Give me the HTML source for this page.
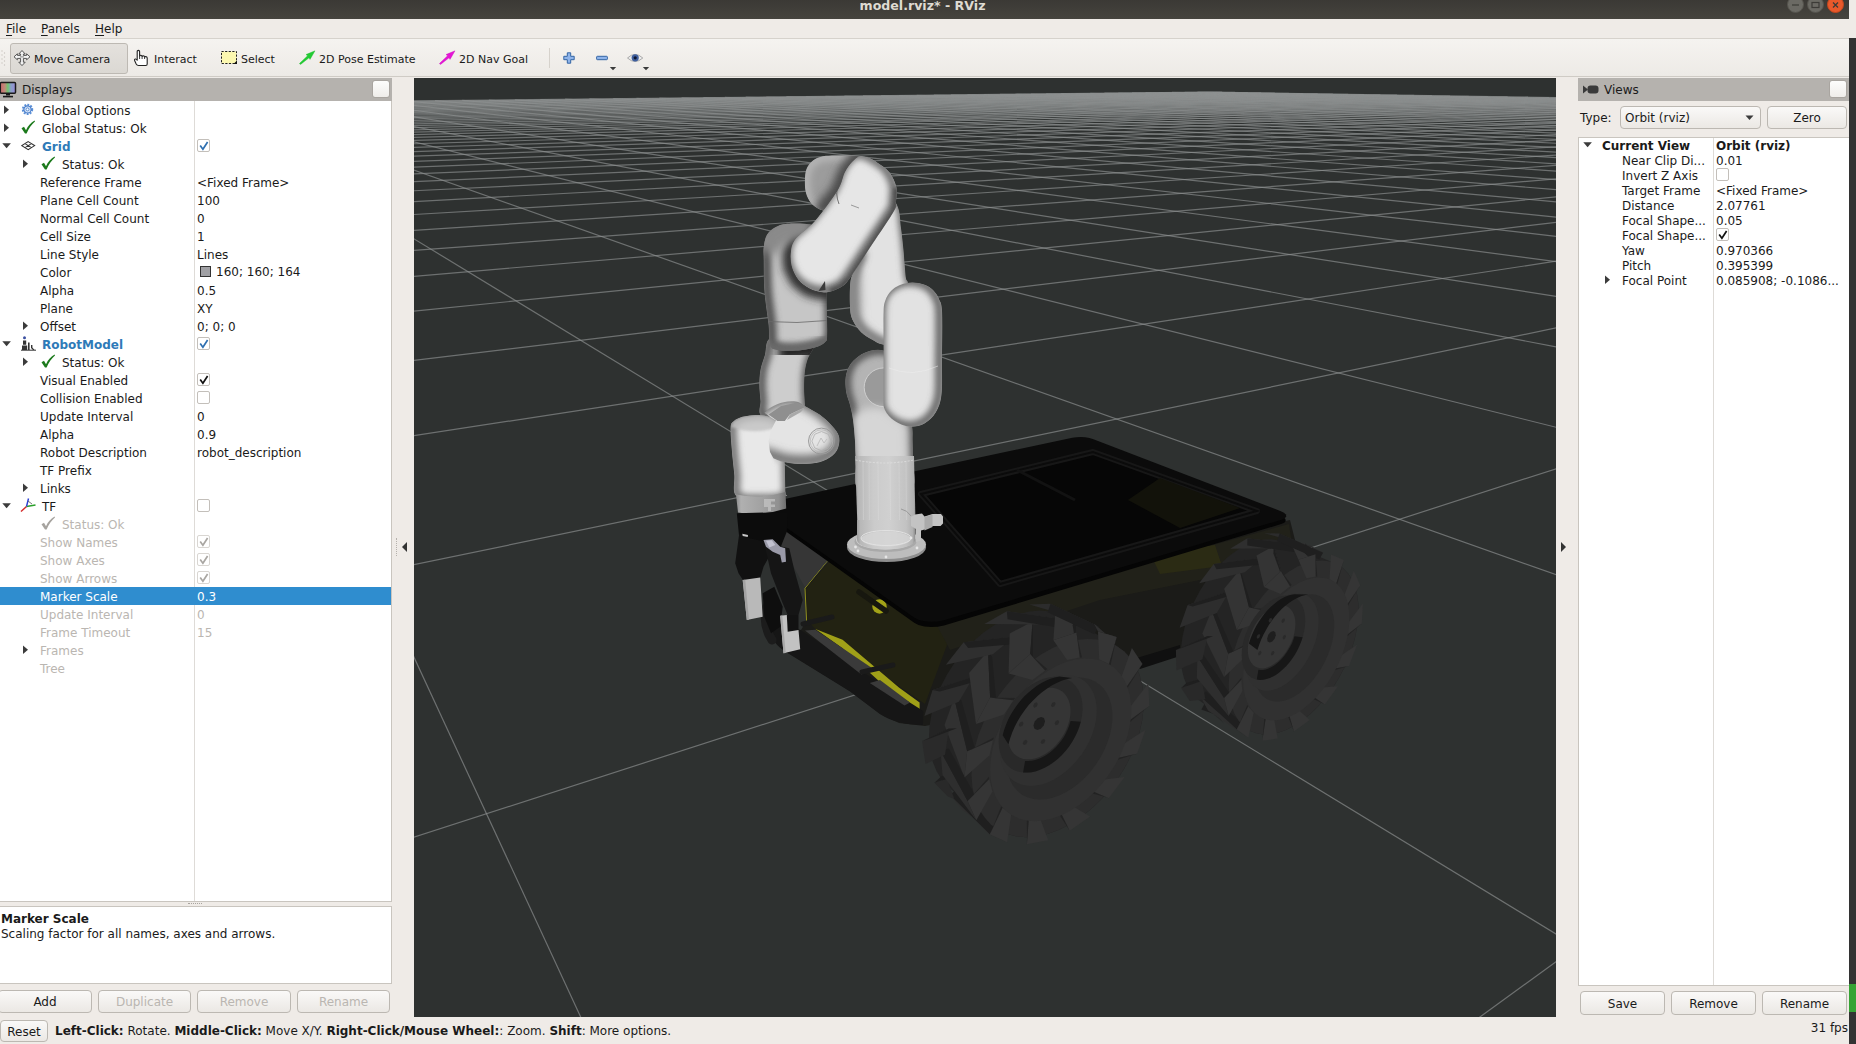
<!DOCTYPE html>
<html lang="en"><head><meta charset="utf-8"><title>model.rviz* - RViz</title>
<style>
*{box-sizing:border-box;margin:0;padding:0}
html,body{width:1856px;height:1044px;overflow:hidden;background:#efebe7}
body{font-family:"DejaVu Sans","Liberation Sans",sans-serif;font-size:12px;color:#1a1a1a;position:relative;line-height:18px}
.abs{position:absolute}
.t{position:absolute;white-space:nowrap;height:18px;line-height:18px}
.dis{color:#bab6b1}
.btn{position:absolute;border:1px solid #bcb8b2;border-radius:4px;background:linear-gradient(#faf9f8,#ebe8e4);text-align:center;font-size:12px;line-height:21px}
.cb{position:absolute;width:13px;height:13px;border:1px solid #c3bfba;border-radius:2px;background:#fff}
.b{font-weight:bold}
.blue{color:#2e7ab8;font-weight:bold}
u{text-decoration:underline;text-underline-offset:2px}
</style></head>
<body>
<div class="abs" style="left:0;top:0;width:1849px;height:19px;background:linear-gradient(#3b3935,#46443e)"></div>
<div class="t b" style="left:0;width:1849px;top:-3px;text-align:center;color:#dfdbd2;font-size:12.6px;padding-right:4px">model.rviz* - RViz</div>
<svg class="abs" style="left:1780px;top:0" width="70" height="19" viewBox="0 0 70 19"><circle cx="15.5" cy="4.5" r="8" fill="#6b6a64" stroke="#55534d"/><path d="M12 5h7" stroke="#3c3b37" stroke-width="1.2"/><circle cx="35.5" cy="4.5" r="8" fill="#6b6a64" stroke="#55534d"/><rect x="32" y="2.5" width="7" height="5" fill="none" stroke="#3c3b37" stroke-width="1.2"/><circle cx="55.5" cy="4.5" r="8" fill="#e9592b" stroke="#c4461d"/><path d="M53 2.5l5 5m0-5l-5 5" stroke="#3c3b37" stroke-width="1.3"/></svg>
<div class="abs" style="left:1849px;top:38px;width:7px;height:1006px;background:#333333"></div>
<div class="abs" style="left:1849px;top:984px;width:7px;height:28px;background:#35a334"></div>
<div class="abs" style="left:0;top:19px;width:1849px;height:20px;background:#efebe7;border-bottom:1px solid #d6d2cc"></div>
<div class="t" style="left:6px;top:20px"><u>F</u>ile</div>
<div class="t" style="left:41px;top:20px"><u>P</u>anels</div>
<div class="t" style="left:95px;top:20px"><u>H</u>elp</div>
<div class="abs" style="left:0;top:39px;width:1849px;height:38px;background:linear-gradient(#f5f3f0,#edeae6);border-bottom:1px solid #cfcbc5"></div>
<div class="abs" style="left:10px;top:43px;width:118px;height:31px;border:1px solid #bdb9b3;border-radius:3px;background:linear-gradient(#e4e1dd,#dbd8d3)"></div>
<div class="t" style="left:34px;top:51px;font-size:11px">Move Camera</div>
<div class="t" style="left:154px;top:51px;font-size:11px">Interact</div>
<div class="t" style="left:241px;top:51px;font-size:11px">Select</div>
<div class="t" style="left:319px;top:51px;font-size:11px">2D Pose Estimate</div>
<div class="t" style="left:459px;top:51px;font-size:11px">2D Nav Goal</div>
<div class="abs" style="left:549px;top:48px;width:1px;height:20px;background:#d6d2cc"></div>
<div class="abs" style="left:0;top:78px;width:392px;height:23px;background:#b5b2ae"></div>
<div class="t" style="left:22px;top:81px">Displays</div>
<div class="abs" style="left:372px;top:80px;width:18px;height:18px;border:1px solid #a9a5a0;border-radius:3px;background:linear-gradient(#fdfdfc,#efedea)"></div>
<div class="abs" style="left:0;top:101px;width:392px;height:801px;background:#fff;border-right:1px solid #c9c5bf;border-bottom:1px solid #c9c5bf"></div>
<div class="abs" style="left:194px;top:101px;width:1px;height:800px;background:#dedbd7"></div>
<svg class="abs" style="left:4px;top:105px" width="8" height="10" viewBox="0 0 8 10"><path d="M0 0.5 L5 4.7 L0 9Z" fill="#3b3b3b"/></svg>
<svg class="abs" style="left:21px;top:103px" width="14" height="14" viewBox="0.5 0.6 14 14"><circle cx="7" cy="7" r="4.6" fill="none" stroke="#5b8fd6" stroke-width="2.2" stroke-dasharray="1.8 1.2"/><circle cx="7" cy="7" r="3.6" fill="#dbe7f8" stroke="#4a7fcb" stroke-width="1.2"/><circle cx="7" cy="7" r="1.5" fill="#fff" stroke="#4a7fcb" stroke-width="0.9"/></svg>
<div class="t " style="left:42px;top:102px;">Global Options</div>
<svg class="abs" style="left:4px;top:123px" width="8" height="10" viewBox="0 0 8 10"><path d="M0 0.5 L5 4.7 L0 9Z" fill="#3b3b3b"/></svg>
<svg class="abs" style="left:20px;top:120px" width="16" height="14" viewBox="0 0 16 14"><path d="M1.5 8.2 L4 6.8 L6 10.2 C8 6 11 2.6 14.6 0.6 L15 1.4 C11.5 4.4 8.6 8.6 6.6 13.4 L5 13.4 Z" fill="#1c7a1c"/></svg>
<div class="t " style="left:42px;top:120px;">Global Status: Ok</div>
<svg class="abs" style="left:2px;top:143px" width="11" height="7" viewBox="0 0 11 7"><path d="M0.3 0.3 L8.9 0.3 L4.6 5.2Z" fill="#3b3b3b"/></svg>
<svg class="abs" style="left:21px;top:141px" width="15" height="11" viewBox="0 0 15 11"><path d="M7.2 0.6 L13.6 4.6 L7.2 8.6 L0.8 4.6Z M4 2.6 L10.4 6.6 M10.4 2.6 L4 6.6" fill="none" stroke="#333" stroke-width="1.1"/></svg>
<div class="t blue" style="left:42px;top:138px;">Grid</div>
<div class="cb" style="left:197px;top:139px;"></div><svg class="abs" style="left:199px;top:141px" width="10" height="10" viewBox="0 0 10 10"><path d="M1.2 4.6 L3.9 8.2 L8.6 1" fill="none" stroke="#2e6fb0" stroke-width="1.7"/></svg>
<svg class="abs" style="left:23px;top:159px" width="8" height="10" viewBox="0 0 8 10"><path d="M0 0.5 L5 4.7 L0 9Z" fill="#3b3b3b"/></svg>
<svg class="abs" style="left:40px;top:156px" width="16" height="14" viewBox="0 0 16 14"><path d="M1.5 8.2 L4 6.8 L6 10.2 C8 6 11 2.6 14.6 0.6 L15 1.4 C11.5 4.4 8.6 8.6 6.6 13.4 L5 13.4 Z" fill="#1c7a1c"/></svg>
<div class="t " style="left:62px;top:156px;">Status: Ok</div>
<div class="t " style="left:40px;top:174px;">Reference Frame</div>
<div class="t " style="left:197px;top:174px;">&lt;Fixed Frame&gt;</div>
<div class="t " style="left:40px;top:192px;">Plane Cell Count</div>
<div class="t " style="left:197px;top:192px;">100</div>
<div class="t " style="left:40px;top:210px;">Normal Cell Count</div>
<div class="t " style="left:197px;top:210px;">0</div>
<div class="t " style="left:40px;top:228px;">Cell Size</div>
<div class="t " style="left:197px;top:228px;">1</div>
<div class="t " style="left:40px;top:246px;">Line Style</div>
<div class="t " style="left:197px;top:246px;">Lines</div>
<div class="t " style="left:40px;top:264px;">Color</div>
<div class="abs" style="left:200px;top:266px;width:11px;height:11px;background:#a0a0a4;border:1px solid #333"></div>
<div class="t" style="left:216px;top:263px">160; 160; 164</div>
<div class="t " style="left:40px;top:282px;">Alpha</div>
<div class="t " style="left:197px;top:282px;">0.5</div>
<div class="t " style="left:40px;top:300px;">Plane</div>
<div class="t " style="left:197px;top:300px;">XY</div>
<svg class="abs" style="left:23px;top:321px" width="8" height="10" viewBox="0 0 8 10"><path d="M0 0.5 L5 4.7 L0 9Z" fill="#3b3b3b"/></svg>
<div class="t " style="left:40px;top:318px;">Offset</div>
<div class="t " style="left:197px;top:318px;">0; 0; 0</div>
<svg class="abs" style="left:2px;top:341px" width="11" height="7" viewBox="0 0 11 7"><path d="M0.3 0.3 L8.9 0.3 L4.6 5.2Z" fill="#3b3b3b"/></svg>
<svg class="abs" style="left:20px;top:336px" width="17" height="15" viewBox="0 0 17 15"><circle cx="4.5" cy="1.8" r="1.5" fill="#3a4fa0"/><path d="M3 4.5h3.2v4.2H3z M2 9.5h5.2v4.5H2z M8 6.5 h1.6 v7.5 H8z M11 9 h1.4 v2.6 l2.2 2.4 h-1.6 l-2 -2z" fill="#333"/><path d="M1 14.2h15" stroke="#333" stroke-width="1"/></svg>
<div class="t blue" style="left:42px;top:336px;">RobotModel</div>
<div class="cb" style="left:197px;top:337px;"></div><svg class="abs" style="left:199px;top:339px" width="10" height="10" viewBox="0 0 10 10"><path d="M1.2 4.6 L3.9 8.2 L8.6 1" fill="none" stroke="#2e6fb0" stroke-width="1.7"/></svg>
<svg class="abs" style="left:23px;top:357px" width="8" height="10" viewBox="0 0 8 10"><path d="M0 0.5 L5 4.7 L0 9Z" fill="#3b3b3b"/></svg>
<svg class="abs" style="left:40px;top:354px" width="16" height="14" viewBox="0 0 16 14"><path d="M1.5 8.2 L4 6.8 L6 10.2 C8 6 11 2.6 14.6 0.6 L15 1.4 C11.5 4.4 8.6 8.6 6.6 13.4 L5 13.4 Z" fill="#1c7a1c"/></svg>
<div class="t " style="left:62px;top:354px;">Status: Ok</div>
<div class="t " style="left:40px;top:372px;">Visual Enabled</div>
<div class="cb" style="left:197px;top:373px;"></div><svg class="abs" style="left:199px;top:375px" width="10" height="10" viewBox="0 0 10 10"><path d="M1.2 4.6 L3.9 8.2 L8.6 1" fill="none" stroke="#111" stroke-width="1.7"/></svg>
<div class="t " style="left:40px;top:390px;">Collision Enabled</div>
<div class="cb" style="left:197px;top:391px;"></div>
<div class="t " style="left:40px;top:408px;">Update Interval</div>
<div class="t " style="left:197px;top:408px;">0</div>
<div class="t " style="left:40px;top:426px;">Alpha</div>
<div class="t " style="left:197px;top:426px;">0.9</div>
<div class="t " style="left:40px;top:444px;">Robot Description</div>
<div class="t " style="left:197px;top:444px;">robot_description</div>
<div class="t " style="left:40px;top:462px;">TF Prefix</div>
<svg class="abs" style="left:23px;top:483px" width="8" height="10" viewBox="0 0 8 10"><path d="M0 0.5 L5 4.7 L0 9Z" fill="#3b3b3b"/></svg>
<div class="t " style="left:40px;top:480px;">Links</div>
<svg class="abs" style="left:2px;top:503px" width="11" height="7" viewBox="0 0 11 7"><path d="M0.3 0.3 L8.9 0.3 L4.6 5.2Z" fill="#3b3b3b"/></svg>
<svg class="abs" style="left:20px;top:498px" width="17" height="15" viewBox="0 0 17 15"><path d="M6.5 8.5 L1 13.5" stroke="#d42a2a" stroke-width="1.4"/><path d="M6.5 8.5 L15.5 7" stroke="#2aa02a" stroke-width="1.4"/><path d="M6.5 8.5 L8.5 0.5" stroke="#2a3fd4" stroke-width="1.4"/><path d="M8 3 L12 6" stroke="#555" stroke-width="0.8"/></svg>
<div class="t " style="left:42px;top:498px;">TF</div>
<div class="cb" style="left:197px;top:499px;"></div>
<svg class="abs" style="left:40px;top:516px" width="16" height="14" viewBox="0 0 16 14"><path d="M1.5 8.2 L4 6.8 L6 10.2 C8 6 11 2.6 14.6 0.6 L15 1.4 C11.5 4.4 8.6 8.6 6.6 13.4 L5 13.4 Z" fill="#a6a39f"/></svg>
<div class="t dis" style="left:62px;top:516px;">Status: Ok</div>
<div class="t dis" style="left:40px;top:534px;">Show Names</div>
<div class="cb" style="left:197px;top:535px;border-color:#d9d6d2;"></div><svg class="abs" style="left:199px;top:537px" width="10" height="10" viewBox="0 0 10 10"><path d="M1.2 4.6 L3.9 8.2 L8.6 1" fill="none" stroke="#a9a6a2" stroke-width="1.7"/></svg>
<div class="t dis" style="left:40px;top:552px;">Show Axes</div>
<div class="cb" style="left:197px;top:553px;border-color:#d9d6d2;"></div><svg class="abs" style="left:199px;top:555px" width="10" height="10" viewBox="0 0 10 10"><path d="M1.2 4.6 L3.9 8.2 L8.6 1" fill="none" stroke="#a9a6a2" stroke-width="1.7"/></svg>
<div class="t dis" style="left:40px;top:570px;">Show Arrows</div>
<div class="cb" style="left:197px;top:571px;border-color:#d9d6d2;"></div><svg class="abs" style="left:199px;top:573px" width="10" height="10" viewBox="0 0 10 10"><path d="M1.2 4.6 L3.9 8.2 L8.6 1" fill="none" stroke="#a9a6a2" stroke-width="1.7"/></svg>
<div class="abs" style="left:0;top:587px;width:391px;height:18px;background:#2f8dcf"></div>
<div class="t " style="left:40px;top:588px;color:#fff;">Marker Scale</div>
<div class="t " style="left:197px;top:588px;color:#fff;">0.3</div>
<div class="t dis" style="left:40px;top:606px;">Update Interval</div>
<div class="t dis" style="left:197px;top:606px;">0</div>
<div class="t dis" style="left:40px;top:624px;">Frame Timeout</div>
<div class="t dis" style="left:197px;top:624px;">15</div>
<svg class="abs" style="left:23px;top:645px" width="8" height="10" viewBox="0 0 8 10"><path d="M0 0.5 L5 4.7 L0 9Z" fill="#3b3b3b"/></svg>
<div class="t dis" style="left:40px;top:642px;">Frames</div>
<div class="t dis" style="left:40px;top:660px;">Tree</div>
<div class="abs" style="left:188px;top:903px;width:14px;height:1px;border-top:1px dotted #a8a49f"></div>
<div class="abs" style="left:0;top:906px;width:392px;height:78px;background:#fff;border:1px solid #c9c5bf;border-left:none"></div>
<div class="t b" style="left:1px;top:910px">Marker Scale</div>
<div class="t" style="left:1px;top:925px">Scaling factor for all names, axes and arrows.</div>
<div class="btn" style="left:-2px;top:990px;width:94px;height:23px;line-height:23px">Add</div>
<div class="btn dis" style="left:98px;top:990px;width:93px;height:23px;line-height:23px">Duplicate</div>
<div class="btn dis" style="left:197px;top:990px;width:94px;height:23px;line-height:23px">Remove</div>
<div class="btn dis" style="left:297px;top:990px;width:93px;height:23px;line-height:23px">Rename</div>
<svg class="abs" style="left:401px;top:541px" width="7" height="12" viewBox="0 0 7 12"><path d="M6 1 L1 6 L6 11Z" fill="#333"/></svg>
<div class="abs" style="left:396px;top:538px;width:1px;height:18px;border-left:1px dotted #b5b1ac"></div>
<svg class="abs" style="left:1560px;top:541px" width="7" height="12" viewBox="0 0 7 12"><path d="M1 1 L6 6 L1 11Z" fill="#333"/></svg>
<div class="btn" style="left:0px;top:1020px;width:48px;height:22px;line-height:22px">Reset</div>
<div class="t" style="left:55px;top:1022px"><b>Left-Click:</b> Rotate. <b>Middle-Click:</b> Move X/Y. <b>Right-Click/Mouse Wheel:</b>: Zoom. <b>Shift</b>: More options.</div>
<div class="t" style="left:1780px;width:68px;text-align:right;top:1019px">31 fps</div>
<div class="abs" style="left:1578px;top:78px;width:271px;height:23px;background:#b5b2ae"></div>
<svg class="abs" style="left:1582px;top:84px" width="17" height="11" viewBox="0 0 17 11"><path d="M1 1.5 L6 5.5 L1 9.5Z" fill="#3a3a3a"/><rect x="5.5" y="1.5" width="11" height="8" rx="3" fill="#3a3a3a"/></svg>
<div class="t" style="left:1604px;top:81px">Views</div>
<div class="abs" style="left:1829px;top:80px;width:18px;height:18px;border:1px solid #a9a5a0;border-radius:3px;background:linear-gradient(#fdfdfc,#efedea)"></div>
<div class="t" style="left:1580px;top:109px">Type:</div>
<div class="btn" style="left:1620px;top:106px;width:141px;height:23px;text-align:left;padding-left:4px;line-height:23px">Orbit (rviz)</div>
<svg class="abs" style="left:1745px;top:115px" width="9" height="6" viewBox="0 0 9 6"><path d="M0.5 0.5 L8.5 0.5 L4.5 5Z" fill="#3b3b3b"/></svg>
<div class="btn" style="left:1767px;top:106px;width:80px;height:23px;line-height:23px">Zero</div>
<div class="abs" style="left:1578px;top:137px;width:271px;height:849px;background:#fff;border:1px solid #c9c5bf;border-right:none"></div>
<div class="abs" style="left:1713px;top:138px;width:1px;height:847px;background:#dedbd7"></div>
<svg class="abs" style="left:1583px;top:142px" width="11" height="7" viewBox="0 0 11 7"><path d="M0.3 0.3 L8.9 0.3 L4.6 5.2Z" fill="#3b3b3b"/></svg>
<div class="t b" style="left:1602px;top:137px">Current View</div><div class="t b" style="left:1716px;top:137px">Orbit (rviz)</div>
<div class="t" style="left:1622px;top:152px">Near Clip Di...</div>
<div class="t" style="left:1716px;top:152px">0.01</div>
<div class="t" style="left:1622px;top:167px">Invert Z Axis</div>
<div class="cb" style="left:1716px;top:168px;"></div>
<div class="t" style="left:1622px;top:182px">Target Frame</div>
<div class="t" style="left:1716px;top:182px">&lt;Fixed Frame&gt;</div>
<div class="t" style="left:1622px;top:197px">Distance</div>
<div class="t" style="left:1716px;top:197px">2.07761</div>
<div class="t" style="left:1622px;top:212px">Focal Shape...</div>
<div class="t" style="left:1716px;top:212px">0.05</div>
<div class="t" style="left:1622px;top:227px">Focal Shape...</div>
<div class="cb" style="left:1716px;top:228px;"></div><svg class="abs" style="left:1718px;top:230px" width="10" height="10" viewBox="0 0 10 10"><path d="M1.2 4.6 L3.9 8.2 L8.6 1" fill="none" stroke="#111" stroke-width="1.7"/></svg>
<div class="t" style="left:1622px;top:242px">Yaw</div>
<div class="t" style="left:1716px;top:242px">0.970366</div>
<div class="t" style="left:1622px;top:257px">Pitch</div>
<div class="t" style="left:1716px;top:257px">0.395399</div>
<div class="t" style="left:1622px;top:272px">Focal Point</div>
<div class="t" style="left:1716px;top:272px">0.085908; -0.1086...</div>
<svg class="abs" style="left:1605px;top:275px" width="8" height="10" viewBox="0 0 8 10"><path d="M0 0.5 L5 4.7 L0 9Z" fill="#3b3b3b"/></svg>
<div class="btn" style="left:1580px;top:991px;width:85px;height:24px;line-height:24px">Save</div>
<div class="btn" style="left:1671px;top:991px;width:85px;height:24px;line-height:24px">Remove</div>
<div class="btn" style="left:1762px;top:991px;width:85px;height:24px;line-height:24px">Rename</div>
<svg class="abs" style="left:0;top:39px" width="700" height="38" viewBox="0 39 700 38">
<!-- grip -->
<g fill="#c9c5bf"><circle cx="2" cy="51" r="0.7"/><circle cx="4.5" cy="53" r="0.7"/><circle cx="2" cy="55" r="0.7"/><circle cx="4.5" cy="57" r="0.7"/><circle cx="2" cy="59" r="0.7"/><circle cx="4.5" cy="61" r="0.7"/><circle cx="2" cy="63" r="0.7"/><circle cx="4.5" cy="65" r="0.7"/></g>
<!-- move camera icon -->
<g transform="translate(22,58)" fill="#f4f4f4" stroke="#555" stroke-width="1" stroke-linejoin="round">
<path d="M0 -7.5 L3.2 -4 L1.4 -4 L1.4 -2.6 L4.6 -2.6 L4.6 -4.2 L8 -1.2 L4.6 1.8 L4.6 0.4 L1.4 0.4 L1.4 4.2 L3.2 4.2 L0 7.6 L-3.2 4.2 L-1.4 4.2 L-1.4 0.4 L-4.6 0.4 L-4.6 1.8 L-8 -1.2 L-4.6 -4.2 L-4.6 -2.6 L-1.4 -2.6 L-1.4 -4 L-3.2 -4Z"/>
<path d="M-2 -1.1 h4" stroke-width="0.7"/>
</g>
<!-- hand icon -->
<g transform="translate(134,50)" fill="#fff" stroke="#222" stroke-width="1.1" stroke-linejoin="round">
<path d="M3.2 9.5 L3.2 1.6 Q3.2 0.4 4.4 0.4 Q5.6 0.4 5.6 1.6 L5.6 6 Q5.8 5.2 6.9 5.2 Q8 5.2 8.1 6.4 Q8.4 5.8 9.4 5.8 Q10.5 5.9 10.6 7 Q11 6.5 12 6.6 Q13.2 6.8 13.2 8 L13.2 14 Q13.2 15.5 11.8 15.5 L4.6 15.5 Q3 15.5 2.2 14 L0.6 10.6 Q0.2 9.4 1.2 9 Q2.3 8.7 3.2 10.2Z"/>
<path d="M5.6 6 v3 M8.1 6.4 v2.6 M10.6 7 v2" fill="none" stroke-width="0.9"/>
</g>
<!-- select icon -->
<rect x="221.5" y="51.5" width="15" height="12" fill="#fcf8b0" stroke="#222" stroke-width="1" stroke-dasharray="2.2 1.4"/>
<path d="M237 60.5 L237 64 L233.5 64Z" fill="#111"/>
<!-- green arrow -->
<path d="M299.4 63.6 L300.6 64.4 L309 57.8 L310 59.4 L315 50.8 L306 54.6 L307.6 55.8 Z" fill="#22cc33" stroke="#1fb82e" stroke-width="0.4"/>
<!-- magenta arrow -->
<path d="M439.4 63.6 L440.6 64.4 L449 57.8 L450 59.4 L455 50.8 L446 54.6 L447.6 55.8 Z" fill="#e614d6" stroke="#c810ba" stroke-width="0.4"/>
<!-- plus -->
<path d="M567.3 52.8 h3.4 v3.5 h3.5 v3.4 h-3.5 v3.5 h-3.4 v-3.5 h-3.5 v-3.4 h3.5z" fill="#8fb4ea" stroke="#3465a4" stroke-width="1" stroke-linejoin="round"/>
<!-- minus -->
<rect x="596.6" y="56.3" width="10.8" height="3.4" rx="0.8" fill="#8fb4ea" stroke="#3465a4" stroke-width="1"/>
<path d="M609.8 67 h6.4 l-3.2 3.2z" fill="#3a3a3a"/>
<!-- eye -->
<path d="M627.5 58 Q635 50.8 642.8 58 Q635 65 627.5 58Z" fill="#ececec" stroke="#aaaaaa" stroke-width="1"/>
<circle cx="635.2" cy="57.8" r="3.6" fill="#3f5f9e"/><circle cx="635.2" cy="57.8" r="1.6" fill="#0c1530"/>
<path d="M642.8 67 h6.4 l-3.2 3.2z" fill="#3a3a3a"/>
</svg>
<!-- displays icon -->
<svg class="abs" style="left:0;top:81px" width="17" height="18" viewBox="0 0 17 18">
<defs><linearGradient id="dsp" x1="0" x2="1" y1="0" y2="0"><stop offset="0" stop-color="#c76a6a"/><stop offset="0.3" stop-color="#c08a7a"/><stop offset="0.5" stop-color="#6fc46f"/><stop offset="0.7" stop-color="#8aa0c8"/><stop offset="1" stop-color="#9a8ad8"/></linearGradient></defs>
<rect x="0.3" y="1.6" width="15.2" height="10.6" rx="1" fill="url(#dsp)" stroke="#1a1a1a" stroke-width="1.5"/>
<path d="M6 12.5 h4 v2 h-4z" fill="#1a1a1a"/><path d="M3 15.6 h10" stroke="#1a1a1a" stroke-width="1.6"/>
</svg>

<div class="abs" style="left:414px;top:78px;width:1142px;height:939px;background:#2e3130;overflow:hidden"><svg class="abs" style="left:0;top:0" width="1142" height="939" viewBox="0 0 1142 939"><g fill="none" stroke="#8f9191" stroke-opacity="0.66" stroke-width="1.2"><path d="M795.8 14.0L1147.0 19.8"/><path d="M795.8 14.0L-5.0 23.0"/><path d="M783.4 14.1L1147.0 20.3"/><path d="M808.2 14.2L-5.0 23.5"/><path d="M770.7 14.3L1147.0 20.7"/><path d="M820.9 14.4L-5.0 24.0"/><path d="M757.9 14.4L1147.0 21.2"/><path d="M833.9 14.6L-5.0 24.6"/><path d="M744.8 14.6L1147.0 21.8"/><path d="M847.2 14.8L-5.0 25.2"/><path d="M731.5 14.7L1147.0 22.3"/><path d="M860.8 15.1L-5.0 25.8"/><path d="M718.0 14.9L1147.0 22.9"/><path d="M874.8 15.3L-5.0 26.4"/><path d="M704.3 15.0L1147.0 23.5"/><path d="M889.1 15.5L-5.0 27.1"/><path d="M690.4 15.2L1147.0 24.1"/><path d="M903.7 15.8L-5.0 27.8"/><path d="M676.2 15.3L1147.0 24.8"/><path d="M918.8 16.0L-5.0 28.6"/><path d="M661.8 15.5L1147.0 25.4"/><path d="M934.2 16.3L-5.0 29.3"/><path d="M647.1 15.7L1147.0 26.2"/><path d="M950.1 16.5L-5.0 30.1"/><path d="M632.1 15.8L1147.0 26.9"/><path d="M966.4 16.8L-5.0 31.0"/><path d="M617.0 16.0L1147.0 27.7"/><path d="M983.1 17.1L-5.0 31.9"/><path d="M601.5 16.2L1147.0 28.5"/><path d="M1000.2 17.4L-5.0 32.8"/><path d="M585.8 16.3L1147.0 29.4"/><path d="M1017.9 17.7L-5.0 33.8"/><path d="M569.7 16.5L1147.0 30.4"/><path d="M1036.0 18.0L-5.0 34.8"/><path d="M553.4 16.7L1147.0 31.3"/><path d="M1054.7 18.3L-5.0 35.9"/><path d="M536.8 16.9L1147.0 32.4"/><path d="M1073.9 18.6L-5.0 37.1"/><path d="M519.9 17.1L1147.0 33.5"/><path d="M1093.6 18.9L-5.0 38.4"/><path d="M502.7 17.3L1147.0 34.7"/><path d="M1114.0 19.2L-5.0 39.7"/><path d="M485.1 17.5L1147.0 35.9"/><path d="M1135.0 19.6L-5.0 41.1"/><path d="M467.2 17.7L1147.0 37.3"/><path d="M1147.0 20.1L-5.0 42.6"/><path d="M449.0 17.9L1147.0 38.7"/><path d="M1147.0 21.0L-5.0 44.2"/><path d="M430.4 18.1L1147.0 40.3"/><path d="M1147.0 21.8L-5.0 45.9"/><path d="M411.4 18.3L1147.0 41.9"/><path d="M1147.0 22.8L-5.0 47.7"/><path d="M392.1 18.5L1147.0 43.7"/><path d="M1147.0 23.8L-5.0 49.7"/><path d="M372.4 18.7L1147.0 45.7"/><path d="M1147.0 24.9L-5.0 51.9"/><path d="M352.3 19.0L1147.0 47.8"/><path d="M1147.0 26.1L-5.0 54.2"/><path d="M331.7 19.2L1147.0 50.1"/><path d="M1147.0 27.4L-5.0 56.7"/><path d="M310.8 19.4L1147.0 52.6"/><path d="M1147.0 28.8L-5.0 59.5"/><path d="M289.4 19.7L1147.0 55.3"/><path d="M1147.0 30.4L-5.0 62.6"/><path d="M267.6 19.9L1147.0 58.4"/><path d="M1147.0 32.1L-5.0 65.9"/><path d="M245.3 20.2L1147.0 61.7"/><path d="M1147.0 34.0L-5.0 69.6"/><path d="M222.5 20.4L1147.0 65.5"/><path d="M1147.0 36.1L-5.0 73.7"/><path d="M199.2 20.7L1147.0 69.7"/><path d="M1147.0 38.5L-5.0 78.3"/><path d="M175.4 20.9L1147.0 74.5"/><path d="M1147.0 41.2L-5.0 83.5"/><path d="M151.1 21.2L1147.0 79.9"/><path d="M1147.0 44.2L-5.0 89.4"/><path d="M126.2 21.5L1147.0 86.1"/><path d="M1147.0 47.6L-5.0 96.1"/><path d="M100.8 21.8L1147.0 93.4"/><path d="M1147.0 51.6L-5.0 103.9"/><path d="M74.8 22.1L1147.0 101.9"/><path d="M1147.0 56.3L-5.0 113.0"/><path d="M48.2 22.4L1147.0 112.0"/><path d="M1147.0 61.9L-5.0 123.8"/><path d="M21.0 22.7L1147.0 124.3"/><path d="M1147.0 68.5L-5.0 136.8"/><path d="M-5.0 23.2L1147.0 139.6"/><path d="M1147.0 76.7L-5.0 152.7"/><path d="M-5.0 26.8L1147.0 158.9"/><path d="M1147.0 87.0L-5.0 172.8"/><path d="M-5.0 31.6L1147.0 184.3"/><path d="M1147.0 100.4L-5.0 198.7"/><path d="M-5.0 38.1L1147.0 219.2"/><path d="M1147.0 118.3L-5.0 233.6"/><path d="M-5.0 47.6L1147.0 269.9"/><path d="M1147.0 143.7L-5.0 283.0"/><path d="M-5.0 62.6L1147.0 350.5"/><path d="M1147.0 182.4L-5.0 358.4"/><path d="M-5.0 90.3L1147.0 498.5"/><path d="M1147.0 248.9L-5.0 487.7"/><path d="M-5.0 157.8L1147.0 859.0"/><path d="M1147.0 389.2L-5.0 760.7"/><path d="M-5.0 568.5L169.0 944.0"/><path d="M1147.0 880.1L1059.0 944.0"/></g><g transform="translate(-414,-78)"><path d="M805.0 588.0L845.0 543.0L930.0 600.0L1290.0 520.0L1300.0 560.0L1215.0 640.0L1178.0 655.0L1140.0 668.0L1060.0 700.0L925.0 726.0L899.0 723.0L880.0 714.0L850.0 691.0L786.0 652.0L772.0 639.0L770.0 622.0L801.0 630.0L807.0 620.0Z" fill="#1b1b18"/><path d="M806.0 588.5L845.0 543.0L960.0 610.0L925.0 704.0L815.0 629.0L807.5 620.0Z" fill="#222212"/><path d="M830 557.5L805 588.2L806.6 621" fill="none" stroke="#8f8f1a" stroke-width="1"/><path d="M935.0 622.0L1289.0 524.0L1292.0 545.0L1225.0 575.0L1100.0 600.0L950.0 650.0Z" fill="#212119"/><path d="M1150.0 553.0L1215.0 545.0L1222.0 566.0L1160.0 574.0Z" fill="#2b2b14"/><path d="M1130.0 660.0L1180.0 645.0L1180.0 656.0L1140.0 669.0Z" fill="#101010"/><path d="M776.0 520.0L830.0 557.5L805.0 587.5L779.0 540.0Z" fill="#363636"/><circle cx="879.5" cy="606.5" r="7.2" fill="#a3a318"/><path d="M859 592L886 611" fill="none" stroke="#17170f" stroke-width="5.5" stroke-linecap="round"/><path d="M815.4 629.0L842.6 639.8L898.9 687.6L919.6 702.6L919.6 709.2L898.9 698.9L842.6 648.2L820.0 632.3Z" fill="#a0a018"/><path d="M771 624C771 640 776 646 786.3 652L850 691.4L880 714C892 722 905 724.5 923 725L923.3 711L890 690L801.3 630.4" fill="#161616"/><path d="M805.0 630.4L815.4 629.8L874.5 669.8L861.4 674.5Z" fill="#3a3a3a"/><path d="M869.8 683.0L880.0 680.0L910.0 702.6L904.5 705.5Z" fill="#3a3a3a"/><path d="M803 624L832 617M862 672L893 665" fill="none" stroke="#1a1a1a" stroke-width="5" stroke-linecap="round"/><path d="M772 600C764 606 762 625 772 640" fill="none" stroke="#1c1c1c" stroke-width="9" stroke-linecap="round"/><path d="M914.2 622.8L918.5 625.0L924.3 626.5L931.0 627.1L937.8 626.7L944.0 625.4L1281.2 524.1L1284.3 522.7L1285.7 521.0L1285.4 519.0L1283.4 517.0L1279.9 515.3L1092.7 442.6L1089.3 441.6L1085.1 441.0L1080.6 440.7L1076.2 440.9L1072.2 441.5L771.1 506.3L766.6 507.6L763.2 509.2L761.2 511.1L760.9 513.0L762.4 514.7Z" fill="#050505"/><path d="M914.0 617.6L918.4 619.8L924.2 621.3L930.9 621.8L937.7 621.5L943.9 620.2L1281.6 519.7L1284.8 518.3L1286.2 516.6L1285.9 514.6L1283.9 512.7L1280.3 510.9L1092.8 438.9L1089.4 437.9L1085.2 437.3L1080.7 437.0L1076.3 437.2L1072.3 437.8L770.7 502.0L766.2 503.3L762.8 504.9L760.9 506.8L760.6 508.7L762.0 510.4Z" fill="#0b0b0b"/><path d="M921.0 494.0L1093.0 452.0L1257.0 511.0L1000.0 584.0Z" fill="#060606" stroke="#171717" stroke-width="6" stroke-linejoin="round"/><path d="M921.0 494.0L1093.0 452.0L1257.0 511.0L1000.0 584.0Z" fill="none" stroke="#0b0b0b" stroke-width="2"/><path d="M1128.0 500.0L1160.0 478.0L1240.0 508.0L1180.0 528.0Z" fill="#12120a"/><path d="M1017 470L1075 500" stroke="#121212" stroke-width="3"/><path d="M1180.8 658.9L1181.0 648.3L1182.4 637.2L1185.0 625.7L1188.7 614.2L1193.5 602.9L1199.2 591.9L1205.8 581.5L1213.1 571.9L1221.1 563.3L1229.4 555.8L1238.0 549.6L1246.7 544.8L1255.3 541.5L1263.6 539.6L1271.6 539.3L1279.0 540.4L1285.8 543.0L1336.9 563.9L1342.9 567.9L1347.9 573.2L1352.1 579.6L1355.2 587.2L1357.3 595.7L1358.4 605.0L1358.4 614.9L1357.4 625.3L1355.4 635.9L1352.5 646.8L1348.7 657.6L1344.0 668.2L1338.5 678.5L1332.4 688.4L1325.6 697.6L1318.4 706.0L1310.7 713.6L1302.8 720.2L1294.6 725.6L1286.5 729.8L1278.3 732.7L1270.4 734.3L1262.8 734.4L1255.7 733.1L1249.2 730.4L1202.1 702.4L1196.2 698.2L1191.1 692.6L1187.0 685.8L1183.8 677.8L1181.7 668.8Z" fill="#242424"/><path d="M1224.0 677.0L1228.3 653.7L1211.6 610.3L1202.4 633.4Z" fill="#313131"/><path d="M1228.3 653.7L1211.6 610.3L1216.4 612.4L1234.0 653.3Z" fill="#1f1f1f"/><path d="M1179.6 627.7L1187.6 604.9L1229.5 591.1L1216.8 612.9Z" fill="#2d2d2d"/><path d="M1187.6 604.9L1229.5 591.1L1233.2 595.1L1192.6 606.6Z" fill="#1f1f1f"/><path d="M1236.8 629.9L1249.0 607.2L1239.6 569.9L1224.2 588.7Z" fill="#343434"/><path d="M1249.0 607.2L1239.6 569.9L1242.0 575.5L1253.0 610.8Z" fill="#1f1f1f"/><path d="M1199.2 583.2L1213.7 564.1L1261.8 557.7L1244.8 572.3Z" fill="#2f2f2f"/><path d="M1213.7 564.1L1261.8 557.7L1262.8 564.4L1216.5 569.2Z" fill="#1f1f1f"/><path d="M1264.0 587.1L1280.9 571.0L1273.8 545.9L1256.5 555.4Z" fill="#343434"/><path d="M1280.9 571.0L1273.8 545.9L1273.4 553.4L1282.2 577.6Z" fill="#1f1f1f"/><path d="M1230.1 548.8L1247.4 538.3L1295.9 544.2L1279.2 548.2Z" fill="#2f2f2f"/><path d="M1247.4 538.3L1295.9 544.2L1294.0 551.9L1247.3 545.5Z" fill="#1f1f1f"/><path d="M1298.5 559.8L1315.5 554.2L1305.4 543.6L1290.5 542.0Z" fill="#333333"/><path d="M1315.5 554.2L1305.4 543.6L1302.4 551.1L1313.9 562.1Z" fill="#1f1f1f"/><path d="M1264.2 533.2L1279.6 533.6L1323.2 552.7L1310.8 545.8Z" fill="#2c2c2c"/><path d="M1279.6 533.6L1323.2 552.7L1319.2 559.5L1277.0 541.1Z" fill="#1f1f1f"/><path d="M1215.3 712.8L1201.4 709.5L1212.9 713.6L1223.8 723.2Z" fill="#282828"/><path d="M1201.4 709.5L1212.9 713.6L1217.9 707.4L1205.1 702.7Z" fill="#1f1f1f"/><path d="M1248.3 737.7L1236.8 729.3L1200.4 696.3L1208.0 710.6Z" fill="#2e2e2e"/><path d="M1236.8 729.3L1200.4 696.3L1206.0 691.2L1241.7 722.8Z" fill="#1f1f1f"/><path d="M1189.8 701.1L1181.2 687.9L1201.8 680.7L1205.4 699.2Z" fill="#292929"/><path d="M1181.2 687.9L1201.8 680.7L1207.8 677.2L1186.6 682.7Z" fill="#1f1f1f"/><path d="M1228.6 715.9L1224.1 698.1L1197.4 656.5L1196.8 677.9Z" fill="#2e2e2e"/><path d="M1224.1 698.1L1197.4 656.5L1203.4 654.7L1230.1 694.1Z" fill="#1f1f1f"/><path d="M1176.4 670.6L1175.9 650.1L1207.6 636.1L1202.5 659.3Z" fill="#2a2a2a"/><path d="M1175.9 650.1L1207.6 636.1L1213.1 636.3L1181.8 648.0Z" fill="#1f1f1f"/><path d="M1229.2 675.0L1230.8 663.4L1233.7 651.5L1237.7 639.6L1242.8 627.7L1248.8 616.2L1255.7 605.3L1263.3 595.2L1271.4 586.1L1280.0 578.3L1288.8 571.7L1297.6 566.6L1306.3 562.9L1314.7 560.9L1322.7 560.4L1330.2 561.4L1336.9 563.9L1342.9 567.9L1347.9 573.2L1352.1 579.6L1355.2 587.2L1357.3 595.7L1358.4 605.0L1358.4 614.9L1357.4 625.3L1355.4 635.9L1352.5 646.8L1348.7 657.6L1344.0 668.2L1338.5 678.5L1332.4 688.4L1325.6 697.6L1318.4 706.0L1310.7 713.6L1302.8 720.2L1294.6 725.6L1286.5 729.8L1278.3 732.7L1270.4 734.3L1262.8 734.4L1255.7 733.1L1249.2 730.4L1243.4 726.1L1238.4 720.5L1234.4 713.6L1231.4 705.4L1229.5 696.1L1228.7 685.9L1229.2 675.0Z" fill="#2d2d2d"/><path d="M1224.0 677.0L1228.3 653.7L1247.3 645.1L1243.5 658.6Z" fill="#353535"/><path d="M1228.3 653.7L1247.3 645.1L1248.1 642.9L1233.9 650.7Z" fill="#232323"/><path d="M1236.8 629.9L1249.0 607.2L1265.1 611.0L1257.3 623.2Z" fill="#353535"/><path d="M1249.0 607.2L1265.1 611.0L1266.5 609.1L1254.0 607.9Z" fill="#232323"/><path d="M1264.0 587.1L1280.9 571.0L1290.1 586.2L1280.3 593.9Z" fill="#353535"/><path d="M1280.9 571.0L1290.1 586.2L1291.7 585.1L1284.0 575.1Z" fill="#232323"/><path d="M1298.5 559.8L1315.5 554.2L1315.8 576.6L1306.5 578.2Z" fill="#353535"/><path d="M1315.5 554.2L1315.8 576.6L1317.3 576.6L1315.9 560.7Z" fill="#232323"/><path d="M1331.0 554.4L1344.0 560.0L1336.1 584.0L1329.5 579.3Z" fill="#353535"/><path d="M1344.0 560.0L1336.1 584.0L1337.1 585.0L1341.9 567.1Z" fill="#232323"/><path d="M1353.9 570.7L1360.3 585.4L1346.6 605.6L1344.0 596.1Z" fill="#353535"/><path d="M1360.3 585.4L1346.6 605.6L1346.9 607.3L1356.4 591.6Z" fill="#232323"/><path d="M1362.9 603.4L1361.8 623.6L1345.6 636.1L1347.3 624.0Z" fill="#353535"/><path d="M1361.8 623.6L1345.6 636.1L1345.1 638.2L1357.1 627.6Z" fill="#232323"/><path d="M1357.0 644.8L1349.0 666.1L1333.7 668.8L1339.3 656.7Z" fill="#353535"/><path d="M1349.0 666.1L1333.7 668.8L1332.7 670.8L1344.4 667.3Z" fill="#232323"/><path d="M1338.0 686.3L1324.8 704.6L1313.6 697.1L1321.9 687.4Z" fill="#353535"/><path d="M1324.8 704.6L1313.6 697.1L1312.2 698.6L1321.3 702.8Z" fill="#232323"/><path d="M1309.8 719.9L1293.9 731.4L1289.2 715.2L1298.6 709.9Z" fill="#353535"/><path d="M1293.9 731.4L1289.2 715.2L1287.7 715.8L1292.2 727.0Z" fill="#232323"/><path d="M1277.7 738.6L1262.3 740.8L1265.6 718.7L1274.1 719.3Z" fill="#353535"/><path d="M1262.3 740.8L1265.6 718.7L1264.3 718.4L1262.9 734.4Z" fill="#232323"/><path d="M1248.3 737.7L1236.8 729.3L1248.1 706.3L1253.7 712.8Z" fill="#353535"/><path d="M1236.8 729.3L1248.1 706.3L1247.3 705.0L1239.9 722.4Z" fill="#232323"/><path d="M1228.6 715.9L1224.1 698.1L1241.3 679.8L1242.4 691.1Z" fill="#353535"/><path d="M1224.1 698.1L1241.3 679.8L1241.3 677.8L1229.0 692.4Z" fill="#232323"/><path d="M1243.5 671.1L1244.9 661.7L1247.2 652.0L1250.5 642.3L1254.6 632.6L1259.5 623.3L1265.1 614.4L1271.3 606.2L1277.9 598.8L1284.9 592.4L1292.0 587.0L1299.2 582.7L1306.3 579.7L1313.2 577.9L1319.7 577.4L1325.8 578.2L1331.4 580.1L1336.3 583.3L1340.5 587.5L1343.9 592.8L1346.6 599.0L1348.3 605.9L1349.3 613.5L1349.3 621.7L1348.6 630.2L1346.9 639.1L1344.5 648.0L1341.4 657.0L1337.5 665.8L1333.0 674.3L1327.9 682.5L1322.3 690.1L1316.3 697.1L1309.9 703.3L1303.3 708.7L1296.6 713.2L1289.9 716.6L1283.2 719.0L1276.7 720.2L1270.5 720.2L1264.7 719.0L1259.4 716.7L1254.7 713.1L1250.7 708.5L1247.4 702.7L1245.0 696.0L1243.6 688.4L1243.0 680.0L1243.5 671.1Z" fill="#313131"/><path d="M1254.6 664.3L1255.7 657.3L1257.4 650.1L1259.9 642.8L1263.0 635.7L1266.6 628.8L1270.8 622.2L1275.3 616.1L1280.3 610.5L1285.4 605.7L1290.7 601.7L1296.1 598.4L1301.4 596.1L1306.6 594.7L1311.5 594.3L1316.1 594.8L1320.3 596.2L1324.0 598.5L1327.3 601.6L1329.9 605.5L1331.9 610.1L1333.3 615.4L1334.1 621.1L1334.2 627.2L1333.6 633.7L1332.5 640.4L1330.7 647.2L1328.3 654.0L1325.3 660.7L1321.9 667.2L1318.0 673.3L1313.8 679.1L1309.2 684.4L1304.4 689.1L1299.4 693.2L1294.3 696.5L1289.2 699.0L1284.1 700.7L1279.2 701.6L1274.6 701.5L1270.2 700.6L1266.3 698.7L1262.8 696.0L1259.8 692.4L1257.4 688.1L1255.7 683.0L1254.6 677.3L1254.2 671.0L1254.6 664.3Z" fill="#2b2b2b"/><path d="M1245.6 656.5L1246.6 650.1L1248.2 643.6L1250.4 637.0L1253.2 630.5L1256.5 624.2L1260.2 618.2L1264.4 612.7L1268.9 607.7L1273.6 603.3L1278.4 599.6L1283.3 596.7L1288.2 594.6L1292.9 593.4L1297.5 593.0L1301.7 593.4L1305.6 594.7L1309.1 596.8L1312.0 599.7L1314.5 603.3L1316.4 607.4L1317.8 612.2L1318.5 617.4L1318.6 623.1L1318.2 629.0L1317.1 635.1L1315.5 641.3L1313.3 647.5L1310.7 653.6L1307.5 659.5L1304.0 665.2L1300.1 670.4L1295.9 675.2L1291.5 679.5L1286.9 683.2L1282.2 686.2L1277.5 688.5L1272.9 690.0L1268.4 690.8L1264.1 690.7L1260.1 689.8L1256.5 688.0L1253.2 685.5L1250.5 682.2L1248.3 678.2L1246.7 673.6L1245.7 668.3L1245.3 662.6L1245.6 656.5Z" fill="#303030"/><path d="M1241.9 650.1L1242.8 644.6L1244.1 639.0L1246.0 633.3L1248.4 627.7L1251.2 622.3L1254.5 617.2L1258.1 612.4L1261.9 608.1L1266.0 604.4L1270.2 601.2L1274.4 598.7L1278.6 596.9L1282.7 595.8L1286.7 595.4L1290.3 595.8L1293.7 596.9L1296.8 598.7L1299.4 601.2L1301.6 604.3L1303.3 607.9L1304.4 612.0L1305.1 616.5L1305.3 621.4L1304.9 626.5L1304.0 631.8L1302.6 637.2L1300.8 642.6L1298.5 647.9L1295.8 653.0L1292.7 657.9L1289.3 662.5L1285.7 666.6L1281.8 670.3L1277.8 673.5L1273.8 676.0L1269.7 678.0L1265.7 679.3L1261.7 679.9L1258.0 679.8L1254.5 679.0L1251.4 677.4L1248.6 675.2L1246.2 672.4L1244.3 668.9L1242.9 664.8L1242.0 660.3L1241.7 655.4L1241.9 650.1Z" fill="#292929"/><path d="M1248.0 645.9L1248.6 641.8L1249.6 637.7L1251.0 633.4L1252.8 629.3L1254.9 625.3L1257.3 621.4L1260.0 617.9L1262.8 614.7L1265.9 611.9L1269.0 609.5L1272.1 607.6L1275.3 606.3L1278.4 605.4L1281.3 605.2L1284.1 605.4L1286.6 606.2L1288.9 607.6L1290.9 609.4L1292.5 611.7L1293.8 614.4L1294.8 617.4L1295.3 620.8L1295.4 624.5L1295.1 628.3L1294.5 632.3L1293.5 636.4L1292.1 640.4L1290.3 644.4L1288.3 648.3L1286.0 652.0L1283.4 655.4L1280.7 658.5L1277.8 661.3L1274.8 663.6L1271.7 665.6L1268.6 667.0L1265.6 668.0L1262.7 668.4L1259.9 668.3L1257.3 667.6L1254.9 666.5L1252.8 664.8L1251.1 662.6L1249.7 660.0L1248.6 657.0L1248.0 653.6L1247.8 649.9L1248.0 645.9Z" fill="#353535"/><path d="M1308.2 594.5L1304.6 595.2L1301.0 596.3L1297.2 597.9L1293.4 599.9L1289.6 602.4L1285.9 605.3L1282.2 608.6L1278.6 612.3L1275.1 616.3L1271.9 620.6L1268.8 625.1L1266.0 629.9L1263.4 634.8L1261.1 639.8L1259.1 645.0L1257.4 650.1L1248.9 643.6L1250.4 639.0L1252.2 634.5L1254.2 630.0L1256.5 625.6L1259.0 621.4L1261.7 617.4L1264.6 613.6L1267.7 610.0L1270.9 606.8L1274.2 603.9L1277.5 601.3L1280.9 599.1L1284.3 597.3L1287.7 595.8L1291.0 594.8L1294.2 594.2Z" fill="#151515"/><path d="M1302.6 637.2L1301.1 641.7L1299.3 646.1L1297.2 650.5L1294.8 654.7L1292.1 658.7L1289.3 662.5L1286.3 666.0L1283.1 669.1L1279.8 672.0L1276.5 674.4L1273.1 676.4L1269.7 678.0L1266.3 679.1L1263.0 679.8L1259.9 679.9L1256.8 679.6L1258.4 669.7L1260.7 670.0L1263.2 669.9L1265.8 669.4L1268.5 668.5L1271.2 667.3L1273.9 665.7L1276.5 663.8L1279.1 661.5L1281.6 659.0L1284.0 656.3L1286.2 653.3L1288.3 650.1L1290.2 646.8L1291.9 643.4L1293.3 639.9L1294.5 636.3Z" fill="#171717"/><path d="M1267.2 638.4L1268.3 634.8L1270.7 632.0L1273.4 631.0L1275.3 632.2L1275.8 635.2L1274.6 638.7L1272.3 641.6L1269.6 642.6L1267.6 641.4L1267.2 638.4Z" fill="#1e1e1e"/><path d="M1256.6 637.1L1257.7 634.8L1259.5 634.1L1260.2 635.8L1259.1 638.1L1257.3 638.8L1256.6 637.1Z" fill="#2a2a2a"/><path d="M1268.5 620.7L1269.6 618.4L1271.4 617.7L1272.1 619.4L1271.0 621.7L1269.2 622.4L1268.5 620.7Z" fill="#2a2a2a"/><path d="M1281.4 621.2L1282.5 618.9L1284.3 618.3L1285.0 619.9L1283.9 622.2L1282.1 622.9L1281.4 621.2Z" fill="#2a2a2a"/><path d="M1282.6 637.8L1283.6 635.5L1285.4 634.8L1286.0 636.5L1284.9 638.7L1283.2 639.4L1282.6 637.8Z" fill="#2a2a2a"/><path d="M1270.9 653.9L1272.0 651.6L1273.8 650.9L1274.4 652.6L1273.3 654.8L1271.6 655.5L1270.9 653.9Z" fill="#2a2a2a"/><path d="M1258.0 653.7L1259.1 651.4L1260.8 650.8L1261.5 652.4L1260.4 654.7L1258.6 655.4L1258.0 653.7Z" fill="#2a2a2a"/><path d="M928.9 738.8L929.5 726.3L931.6 713.4L935.3 700.3L940.4 687.2L947.0 674.5L954.8 662.4L963.8 651.1L973.6 640.9L984.2 632.0L995.3 624.5L1006.6 618.5L1018.0 614.2L1029.3 611.6L1040.1 610.6L1050.4 611.4L1060.0 613.8L1068.7 617.8L1116.3 645.8L1124.0 651.2L1130.5 658.1L1135.7 666.2L1139.7 675.5L1142.4 685.7L1143.6 696.6L1143.6 708.1L1142.2 720.1L1139.5 732.2L1135.6 744.5L1130.5 756.6L1124.3 768.4L1117.1 779.7L1109.0 790.5L1100.1 800.4L1090.5 809.5L1080.4 817.4L1069.9 824.2L1059.1 829.7L1048.2 833.7L1037.4 836.2L1026.9 837.2L1016.8 836.5L1007.3 834.1L998.6 830.1L990.8 824.4L948.6 787.0L942.0 779.9L936.6 771.3L932.6 761.5L930.0 750.6Z" fill="#242424"/><path d="M964.4 777.6L967.2 751.3L954.2 698.3L944.5 724.9Z" fill="#313131"/><path d="M967.2 751.3L954.2 698.3L961.3 700.3L975.3 750.3Z" fill="#1f1f1f"/><path d="M924.4 716.0L932.5 689.9L973.7 676.4L958.8 701.8Z" fill="#2d2d2d"/><path d="M932.5 689.9L973.7 676.4L979.5 680.6L939.7 691.4Z" fill="#1f1f1f"/><path d="M976.0 723.9L990.1 697.4L988.0 650.9L969.1 673.1Z" fill="#343434"/><path d="M990.1 697.4L988.0 650.9L992.1 656.9L996.2 701.0Z" fill="#1f1f1f"/><path d="M945.9 664.8L963.6 642.3L1014.5 636.5L992.8 654.2Z" fill="#2f2f2f"/><path d="M963.6 642.3L1014.5 636.5L1016.8 644.0L968.1 647.9Z" fill="#1f1f1f"/><path d="M1008.6 673.6L1030.2 654.1L1032.6 621.5L1009.7 633.4Z" fill="#343434"/><path d="M1030.2 654.1L1032.6 621.5L1032.9 629.9L1032.9 661.4Z" fill="#1f1f1f"/><path d="M984.4 624.1L1006.8 611.2L1060.1 618.9L1037.5 624.5Z" fill="#2f2f2f"/><path d="M1006.8 611.2L1060.1 618.9L1058.5 627.6L1007.6 619.3Z" fill="#1f1f1f"/><path d="M1053.4 640.2L1076.5 632.6L1076.0 616.7L1055.1 615.9Z" fill="#333333"/><path d="M1076.5 632.6L1076.0 616.7L1072.7 625.2L1075.2 641.5Z" fill="#1f1f1f"/><path d="M1029.3 604.4L1050.5 603.8L1098.9 626.4L1081.0 619.6Z" fill="#2c2c2c"/><path d="M1050.5 603.8L1098.9 626.4L1094.2 634.3L1047.7 612.3Z" fill="#1f1f1f"/><path d="M1098.0 631.6L1116.8 636.9L1107.9 635.7L1093.9 623.5Z" fill="#2f2f2f"/><path d="M1116.8 636.9L1107.9 635.7L1102.3 642.5L1112.4 645.2Z" fill="#1f1f1f"/><path d="M1007.1 842.3L989.8 834.2L950.0 794.9L962.5 810.1Z" fill="#2e2e2e"/><path d="M989.8 834.2L950.0 794.9L957.2 788.8L995.7 826.5Z" fill="#1f1f1f"/><path d="M947.8 796.5L934.4 782.7L946.9 778.7L954.4 798.9Z" fill="#292929"/><path d="M934.4 782.7L946.9 778.7L954.8 774.2L941.2 776.5Z" fill="#1f1f1f"/><path d="M976.3 820.3L967.6 801.1L940.6 751.0L942.5 774.9Z" fill="#2e2e2e"/><path d="M967.6 801.1L940.6 751.0L948.7 748.5L975.5 795.9Z" fill="#1f1f1f"/><path d="M925.5 764.0L922.1 741.3L949.0 728.6L945.0 754.8Z" fill="#2a2a2a"/><path d="M922.1 741.3L949.0 728.6L956.9 728.3L930.1 738.4Z" fill="#1f1f1f"/><path d="M971.5 774.8L972.3 761.8L974.6 748.3L978.6 734.6L984.1 720.9L991.1 707.5L999.3 694.7L1008.7 682.7L1018.9 671.9L1029.9 662.3L1041.4 654.3L1053.1 647.8L1064.8 643.1L1076.3 640.1L1087.4 638.9L1097.8 639.5L1107.5 641.8L1116.3 645.8L1124.0 651.2L1130.5 658.1L1135.7 666.2L1139.7 675.5L1142.4 685.7L1143.6 696.6L1143.6 708.1L1142.2 720.1L1139.5 732.2L1135.6 744.5L1130.5 756.6L1124.3 768.4L1117.1 779.7L1109.0 790.5L1100.1 800.4L1090.5 809.5L1080.4 817.4L1069.9 824.2L1059.1 829.7L1048.2 833.7L1037.4 836.2L1026.9 837.2L1016.8 836.5L1007.3 834.1L998.6 830.1L990.8 824.4L984.2 817.1L978.8 808.4L974.8 798.3L972.4 787.1L971.5 774.8Z" fill="#2d2d2d"/><path d="M964.4 777.6L967.2 751.3L993.0 739.9L989.5 755.3Z" fill="#353535"/><path d="M967.2 751.3L993.0 739.9L993.8 737.4L974.9 747.4Z" fill="#232323"/><path d="M976.0 723.9L990.1 697.4L1013.4 700.2L1004.0 714.5Z" fill="#353535"/><path d="M990.1 697.4L1013.4 700.2L1015.1 698.0L997.2 697.7Z" fill="#232323"/><path d="M1008.6 673.6L1030.2 654.1L1045.2 670.4L1032.4 679.9Z" fill="#353535"/><path d="M1030.2 654.1L1045.2 670.4L1047.3 669.0L1035.1 658.5Z" fill="#232323"/><path d="M1053.4 640.2L1076.5 632.6L1079.9 657.6L1067.1 660.1Z" fill="#353535"/><path d="M1076.5 632.6L1079.9 657.6L1081.9 657.5L1077.9 639.8Z" fill="#232323"/><path d="M1098.0 631.6L1116.8 636.9L1109.0 664.2L1099.2 659.6Z" fill="#353535"/><path d="M1116.8 636.9L1109.0 664.2L1110.5 665.2L1114.9 645.0Z" fill="#232323"/><path d="M1131.9 648.0L1142.5 663.9L1126.2 687.4L1121.4 677.0Z" fill="#353535"/><path d="M1142.5 663.9L1126.2 687.4L1126.8 689.2L1138.0 671.0Z" fill="#232323"/><path d="M1148.4 683.6L1149.3 705.9L1128.7 721.1L1129.6 707.6Z" fill="#353535"/><path d="M1149.3 705.9L1128.7 721.1L1128.3 723.4L1143.4 710.8Z" fill="#232323"/><path d="M1145.5 729.7L1137.1 753.8L1116.5 758.2L1122.7 744.4Z" fill="#353535"/><path d="M1137.1 753.8L1116.5 758.2L1115.3 760.4L1131.0 755.5Z" fill="#232323"/><path d="M1124.6 777.0L1108.7 798.2L1092.4 791.2L1102.6 779.7Z" fill="#353535"/><path d="M1108.7 798.2L1092.4 791.2L1090.6 792.9L1103.7 796.6Z" fill="#232323"/><path d="M1090.1 816.4L1069.6 830.7L1061.0 813.3L1073.3 806.6Z" fill="#353535"/><path d="M1069.6 830.7L1061.0 813.3L1059.0 814.2L1066.7 826.0Z" fill="#232323"/><path d="M1048.2 840.2L1026.9 844.2L1028.7 819.6L1040.5 819.4Z" fill="#353535"/><path d="M1026.9 844.2L1028.7 819.6L1026.8 819.4L1027.0 837.2Z" fill="#232323"/><path d="M1007.1 842.3L989.8 834.2L1002.5 807.7L1011.2 814.3Z" fill="#353535"/><path d="M989.8 834.2L1002.5 807.7L1001.2 806.3L993.2 826.4Z" fill="#232323"/><path d="M976.3 820.3L967.6 801.1L989.2 779.0L992.4 791.4Z" fill="#353535"/><path d="M967.6 801.1L989.2 779.0L988.9 776.8L973.7 794.2Z" fill="#232323"/><path d="M990.1 769.6L990.8 759.0L992.7 748.0L996.0 736.8L1000.5 725.7L1006.2 714.8L1012.8 704.4L1020.4 694.7L1028.7 685.9L1037.6 678.1L1046.9 671.4L1056.4 666.1L1066.0 662.1L1075.3 659.6L1084.4 658.5L1093.0 658.9L1101.0 660.6L1108.2 663.8L1114.6 668.1L1120.0 673.7L1124.4 680.3L1127.8 687.9L1130.0 696.2L1131.1 705.2L1131.1 714.7L1130.0 724.6L1127.8 734.7L1124.6 744.8L1120.4 754.9L1115.3 764.7L1109.3 774.1L1102.6 783.0L1095.2 791.2L1087.2 798.7L1078.8 805.3L1070.1 810.8L1061.2 815.3L1052.2 818.5L1043.4 820.5L1034.7 821.2L1026.4 820.5L1018.7 818.4L1011.6 815.0L1005.4 810.3L1000.0 804.3L995.8 797.0L992.6 788.8L990.7 779.5L990.1 769.6Z" fill="#313131"/><path d="M1006.4 760.4L1006.9 752.5L1008.4 744.3L1010.9 736.0L1014.2 727.8L1018.4 719.7L1023.4 712.0L1029.0 704.8L1035.1 698.2L1041.7 692.4L1048.6 687.4L1055.7 683.4L1062.8 680.4L1069.8 678.4L1076.6 677.5L1083.1 677.7L1089.1 678.9L1094.6 681.2L1099.5 684.4L1103.6 688.5L1107.0 693.4L1109.6 699.1L1111.4 705.4L1112.3 712.1L1112.4 719.3L1111.6 726.8L1110.0 734.5L1107.5 742.2L1104.4 749.8L1100.5 757.3L1095.9 764.4L1090.8 771.2L1085.1 777.4L1079.1 783.0L1072.7 788.0L1066.1 792.1L1059.3 795.4L1052.5 797.8L1045.9 799.2L1039.4 799.6L1033.2 799.0L1027.4 797.3L1022.1 794.7L1017.5 791.0L1013.6 786.4L1010.4 781.0L1008.2 774.7L1006.8 767.8L1006.4 760.4Z" fill="#2b2b2b"/><path d="M999.8 749.9L1000.3 742.7L1001.6 735.3L1003.8 727.8L1006.8 720.3L1010.6 713.0L1015.1 706.0L1020.2 699.5L1025.8 693.6L1031.8 688.3L1038.0 683.8L1044.5 680.2L1051.0 677.4L1057.4 675.7L1063.6 674.9L1069.5 675.0L1075.1 676.2L1080.1 678.2L1084.6 681.1L1088.5 684.9L1091.6 689.4L1094.1 694.6L1095.7 700.3L1096.6 706.5L1096.7 713.1L1096.0 719.9L1094.6 726.9L1092.4 733.9L1089.5 740.9L1085.9 747.7L1081.8 754.2L1077.1 760.3L1071.9 766.0L1066.4 771.1L1060.5 775.6L1054.5 779.3L1048.3 782.3L1042.1 784.4L1035.9 785.6L1030.0 785.9L1024.3 785.3L1019.0 783.7L1014.2 781.3L1010.0 777.9L1006.4 773.7L1003.5 768.7L1001.4 763.0L1000.2 756.7L999.8 749.9Z" fill="#303030"/><path d="M998.6 741.3L999.1 735.1L1000.2 728.7L1002.1 722.3L1004.7 715.9L1008.0 709.6L1011.8 703.6L1016.2 698.0L1021.0 692.9L1026.1 688.4L1031.5 684.5L1037.1 681.4L1042.6 679.1L1048.2 677.5L1053.6 676.8L1058.7 677.0L1063.5 677.9L1067.9 679.7L1071.8 682.2L1075.2 685.5L1078.0 689.3L1080.1 693.8L1081.6 698.8L1082.4 704.1L1082.6 709.8L1082.0 715.7L1080.8 721.8L1078.9 727.9L1076.4 733.9L1073.3 739.8L1069.7 745.5L1065.7 750.8L1061.2 755.7L1056.4 760.1L1051.3 763.9L1046.0 767.1L1040.6 769.6L1035.2 771.4L1029.9 772.4L1024.8 772.6L1019.8 772.1L1015.3 770.7L1011.1 768.5L1007.5 765.5L1004.3 761.8L1001.9 757.5L1000.1 752.6L999.0 747.1L998.6 741.3Z" fill="#292929"/><path d="M1007.6 735.7L1008.0 731.1L1008.8 726.3L1010.3 721.5L1012.2 716.8L1014.6 712.1L1017.5 707.7L1020.7 703.5L1024.3 699.7L1028.1 696.4L1032.1 693.5L1036.2 691.1L1040.4 689.4L1044.5 688.2L1048.6 687.7L1052.4 687.7L1056.0 688.4L1059.3 689.7L1062.3 691.6L1064.9 694.0L1067.0 696.9L1068.6 700.2L1069.8 703.9L1070.4 707.9L1070.5 712.2L1070.1 716.7L1069.2 721.2L1067.8 725.8L1065.9 730.4L1063.6 734.8L1060.9 739.1L1057.8 743.1L1054.4 746.7L1050.8 750.0L1046.9 752.9L1043.0 755.3L1038.9 757.2L1034.9 758.5L1030.9 759.2L1027.0 759.3L1023.3 758.9L1019.9 757.8L1016.8 756.1L1014.1 753.9L1011.8 751.1L1010.0 747.8L1008.7 744.1L1007.9 740.0L1007.6 735.7Z" fill="#353535"/><path d="M1072.1 678.0L1067.2 679.0L1062.2 680.6L1057.2 682.7L1052.1 685.3L1047.2 688.4L1042.3 692.0L1037.6 696.0L1033.0 700.4L1028.7 705.1L1024.7 710.2L1021.0 715.5L1017.7 721.1L1014.7 726.8L1012.2 732.6L1010.1 738.5L1008.4 744.3L1002.7 735.2L1004.1 730.0L1006.0 724.8L1008.2 719.6L1010.8 714.6L1013.8 709.7L1017.1 705.0L1020.6 700.5L1024.4 696.3L1028.5 692.4L1032.7 688.9L1037.0 685.7L1041.4 683.0L1045.9 680.7L1050.4 678.8L1054.9 677.4L1059.3 676.5Z" fill="#151515"/><path d="M1080.8 721.8L1079.2 726.9L1077.3 731.9L1074.9 736.9L1072.2 741.7L1069.1 746.4L1065.7 750.8L1061.9 754.9L1058.0 758.7L1053.8 762.1L1049.5 765.0L1045.1 767.6L1040.6 769.6L1036.1 771.2L1031.7 772.2L1027.3 772.6L1023.1 772.5L1025.1 761.0L1028.4 761.1L1031.8 760.8L1035.3 760.0L1038.9 758.8L1042.4 757.2L1045.9 755.2L1049.3 752.9L1052.6 750.2L1055.8 747.2L1058.7 744.0L1061.4 740.5L1063.9 736.9L1066.0 733.0L1067.9 729.1L1069.4 725.1L1070.6 721.1Z" fill="#171717"/><path d="M1033.5 725.6L1034.7 721.5L1037.6 718.2L1041.2 716.9L1044.0 718.1L1045.0 721.3L1043.8 725.3L1040.9 728.7L1037.3 730.0L1034.5 728.8L1033.5 725.6Z" fill="#1e1e1e"/><path d="M1018.7 725.1L1020.0 722.4L1022.4 721.5L1023.6 723.3L1022.3 725.9L1019.9 726.8L1018.7 725.1Z" fill="#2a2a2a"/><path d="M1033.1 705.9L1034.3 703.2L1036.7 702.3L1037.8 704.1L1036.6 706.8L1034.2 707.7L1033.1 705.9Z" fill="#2a2a2a"/><path d="M1051.0 705.4L1052.2 702.7L1054.6 701.9L1055.7 703.7L1054.4 706.3L1052.1 707.2L1051.0 705.4Z" fill="#2a2a2a"/><path d="M1054.6 723.6L1055.8 721.0L1058.1 720.1L1059.2 721.9L1058.0 724.5L1055.7 725.3L1054.6 723.6Z" fill="#2a2a2a"/><path d="M1040.6 742.4L1041.9 739.8L1044.2 738.9L1045.3 740.6L1044.1 743.2L1041.8 744.1L1040.6 742.4Z" fill="#2a2a2a"/><path d="M1022.7 743.4L1023.9 740.7L1026.3 739.8L1027.5 741.6L1026.2 744.2L1023.9 745.1L1022.7 743.4Z" fill="#2a2a2a"/><defs><filter id="bl1" x="-50%" y="-50%" width="200%" height="200%"><feGaussianBlur stdDeviation="1"/></filter><filter id="bl2" x="-50%" y="-50%" width="200%" height="200%"><feGaussianBlur stdDeviation="2"/></filter><filter id="bl3" x="-50%" y="-50%" width="200%" height="200%"><feGaussianBlur stdDeviation="3"/></filter><filter id="bl4" x="-50%" y="-50%" width="200%" height="200%"><feGaussianBlur stdDeviation="4"/></filter><filter id="bl5" x="-50%" y="-50%" width="200%" height="200%"><feGaussianBlur stdDeviation="5"/></filter><filter id="bl6" x="-50%" y="-50%" width="200%" height="200%"><feGaussianBlur stdDeviation="6"/></filter><filter id="bl8" x="-50%" y="-50%" width="200%" height="200%"><feGaussianBlur stdDeviation="8"/></filter></defs><clipPath id="lc1"><path d="M804.9 181.0C805.0 177.0 805.1 172.4 806.5 169.0C807.9 165.6 810.2 162.6 813.0 160.5C815.8 158.4 819.3 157.1 823.0 156.3C826.7 155.5 830.8 155.6 835.0 155.5C839.2 155.4 843.8 155.3 848.0 155.6C852.2 155.8 857.0 155.4 860.0 157.0C863.0 158.6 866.0 159.5 866.0 165.0C866.0 170.5 863.5 183.3 860.0 190.0C856.5 196.7 850.0 201.6 845.0 205.0C840.0 208.4 834.2 209.8 830.0 210.5C825.8 211.2 823.2 210.8 820.0 209.5C816.8 208.2 813.3 205.8 811.0 203.0C808.7 200.2 807.0 196.7 806.0 193.0C805.0 189.3 804.8 185.0 804.9 181.0Z"/></clipPath><g clip-path="url(#lc1)"><path d="M804.9 181.0C805.0 177.0 805.1 172.4 806.5 169.0C807.9 165.6 810.2 162.6 813.0 160.5C815.8 158.4 819.3 157.1 823.0 156.3C826.7 155.5 830.8 155.6 835.0 155.5C839.2 155.4 843.8 155.3 848.0 155.6C852.2 155.8 857.0 155.4 860.0 157.0C863.0 158.6 866.0 159.5 866.0 165.0C866.0 170.5 863.5 183.3 860.0 190.0C856.5 196.7 850.0 201.6 845.0 205.0C840.0 208.4 834.2 209.8 830.0 210.5C825.8 211.2 823.2 210.8 820.0 209.5C816.8 208.2 813.3 205.8 811.0 203.0C808.7 200.2 807.0 196.7 806.0 193.0C805.0 189.3 804.8 185.0 804.9 181.0Z" fill="#9c9c9c"/><path d="M804.9 181.0C805.0 177.0 805.1 172.4 806.5 169.0C807.9 165.6 810.2 162.6 813.0 160.5C815.8 158.4 819.3 157.1 823.0 156.3C826.7 155.5 830.8 155.6 835.0 155.5C839.2 155.4 843.8 155.3 848.0 155.6C852.2 155.8 857.0 155.4 860.0 157.0C863.0 158.6 866.0 159.5 866.0 165.0C866.0 170.5 863.5 183.3 860.0 190.0C856.5 196.7 850.0 201.6 845.0 205.0C840.0 208.4 834.2 209.8 830.0 210.5C825.8 211.2 823.2 210.8 820.0 209.5C816.8 208.2 813.3 205.8 811.0 203.0C808.7 200.2 807.0 196.7 806.0 193.0C805.0 189.3 804.8 185.0 804.9 181.0Z" fill="none" stroke="#b4b4b4" stroke-opacity="1.0" stroke-width="9" filter="url(#bl3)" transform="translate(1,1)"/><path d="M862 150L845 172L837.3 191.1L819 213" fill="none" stroke="#4a4a4a" stroke-width="14" filter="url(#bl4)"/></g><clipPath id="lc2"><path d="M860.0 255.0C861.0 260.2 857.8 261.8 856.2 266.2C854.6 270.6 851.6 274.5 850.6 281.1C849.6 287.7 849.7 299.6 850.0 306.0C850.3 312.4 850.6 315.3 852.5 319.7C854.4 324.1 857.9 328.9 861.2 332.2C864.5 335.5 868.8 337.6 872.4 339.7C876.0 341.8 878.4 343.7 883.0 344.6C887.6 345.5 895.2 347.4 900.0 345.0C904.8 342.6 910.5 337.5 912.0 330.0C913.5 322.5 909.7 307.8 909.0 300.0C908.3 292.2 908.4 286.6 907.9 283.0C907.4 279.4 906.5 281.4 906.0 278.6C905.5 275.8 905.2 271.0 904.8 266.2C904.4 261.4 904.1 256.4 903.5 250.0C902.9 243.6 902.1 235.5 901.0 228.0C899.9 220.5 900.5 212.2 897.0 205.0C893.5 197.8 887.0 185.0 880.0 185.0C873.0 185.0 860.0 196.7 855.0 205.0C850.0 213.3 849.2 226.7 850.0 235.0C850.8 243.3 859.0 249.8 860.0 255.0Z"/></clipPath><g clip-path="url(#lc2)"><path d="M860.0 255.0C861.0 260.2 857.8 261.8 856.2 266.2C854.6 270.6 851.6 274.5 850.6 281.1C849.6 287.7 849.7 299.6 850.0 306.0C850.3 312.4 850.6 315.3 852.5 319.7C854.4 324.1 857.9 328.9 861.2 332.2C864.5 335.5 868.8 337.6 872.4 339.7C876.0 341.8 878.4 343.7 883.0 344.6C887.6 345.5 895.2 347.4 900.0 345.0C904.8 342.6 910.5 337.5 912.0 330.0C913.5 322.5 909.7 307.8 909.0 300.0C908.3 292.2 908.4 286.6 907.9 283.0C907.4 279.4 906.5 281.4 906.0 278.6C905.5 275.8 905.2 271.0 904.8 266.2C904.4 261.4 904.1 256.4 903.5 250.0C902.9 243.6 902.1 235.5 901.0 228.0C899.9 220.5 900.5 212.2 897.0 205.0C893.5 197.8 887.0 185.0 880.0 185.0C873.0 185.0 860.0 196.7 855.0 205.0C850.0 213.3 849.2 226.7 850.0 235.0C850.8 243.3 859.0 249.8 860.0 255.0Z" fill="#e2e2e2"/><path d="M860.0 255.0C861.0 260.2 857.8 261.8 856.2 266.2C854.6 270.6 851.6 274.5 850.6 281.1C849.6 287.7 849.7 299.6 850.0 306.0C850.3 312.4 850.6 315.3 852.5 319.7C854.4 324.1 857.9 328.9 861.2 332.2C864.5 335.5 868.8 337.6 872.4 339.7C876.0 341.8 878.4 343.7 883.0 344.6C887.6 345.5 895.2 347.4 900.0 345.0C904.8 342.6 910.5 337.5 912.0 330.0C913.5 322.5 909.7 307.8 909.0 300.0C908.3 292.2 908.4 286.6 907.9 283.0C907.4 279.4 906.5 281.4 906.0 278.6C905.5 275.8 905.2 271.0 904.8 266.2C904.4 261.4 904.1 256.4 903.5 250.0C902.9 243.6 902.1 235.5 901.0 228.0C899.9 220.5 900.5 212.2 897.0 205.0C893.5 197.8 887.0 185.0 880.0 185.0C873.0 185.0 860.0 196.7 855.0 205.0C850.0 213.3 849.2 226.7 850.0 235.0C850.8 243.3 859.0 249.8 860.0 255.0Z" fill="none" stroke="#666666" stroke-opacity="1.0" stroke-width="8" filter="url(#bl3)" transform="translate(2,-1)"/><path d="M852 268L853 322Q862 342 890 349" fill="none" stroke="#8a8a8a" stroke-width="15" filter="url(#bl5)"/></g><clipPath id="lc3"><path d="M883.5 350.6C878.7 349.0 875.2 349.7 871.1 350.6C867.0 351.5 862.1 353.8 858.6 356.2C855.1 358.6 852.1 361.4 849.9 364.9C847.7 368.4 846.2 372.8 845.6 377.4C845.0 382.0 845.5 387.7 846.2 392.3C846.9 396.9 848.8 400.2 849.9 404.8C851.0 409.4 852.2 413.9 853.0 419.7C853.8 425.5 854.4 432.6 854.9 439.6C855.4 446.7 855.1 453.6 856.0 462.0C856.9 470.4 851.0 485.3 860.0 490.0C869.0 494.7 901.2 494.7 910.0 490.0C918.8 485.3 912.4 470.3 912.8 462.0C913.2 453.7 912.7 445.8 912.6 440.0C912.5 434.2 913.0 433.9 912.2 427.2C911.4 420.5 910.0 411.2 908.0 400.0C906.0 388.8 904.1 368.2 900.0 360.0C895.9 351.8 888.3 352.2 883.5 350.6Z"/></clipPath><g clip-path="url(#lc3)"><path d="M883.5 350.6C878.7 349.0 875.2 349.7 871.1 350.6C867.0 351.5 862.1 353.8 858.6 356.2C855.1 358.6 852.1 361.4 849.9 364.9C847.7 368.4 846.2 372.8 845.6 377.4C845.0 382.0 845.5 387.7 846.2 392.3C846.9 396.9 848.8 400.2 849.9 404.8C851.0 409.4 852.2 413.9 853.0 419.7C853.8 425.5 854.4 432.6 854.9 439.6C855.4 446.7 855.1 453.6 856.0 462.0C856.9 470.4 851.0 485.3 860.0 490.0C869.0 494.7 901.2 494.7 910.0 490.0C918.8 485.3 912.4 470.3 912.8 462.0C913.2 453.7 912.7 445.8 912.6 440.0C912.5 434.2 913.0 433.9 912.2 427.2C911.4 420.5 910.0 411.2 908.0 400.0C906.0 388.8 904.1 368.2 900.0 360.0C895.9 351.8 888.3 352.2 883.5 350.6Z" fill="#b4b4b4"/><path d="M883.5 350.6C878.7 349.0 875.2 349.7 871.1 350.6C867.0 351.5 862.1 353.8 858.6 356.2C855.1 358.6 852.1 361.4 849.9 364.9C847.7 368.4 846.2 372.8 845.6 377.4C845.0 382.0 845.5 387.7 846.2 392.3C846.9 396.9 848.8 400.2 849.9 404.8C851.0 409.4 852.2 413.9 853.0 419.7C853.8 425.5 854.4 432.6 854.9 439.6C855.4 446.7 855.1 453.6 856.0 462.0C856.9 470.4 851.0 485.3 860.0 490.0C869.0 494.7 901.2 494.7 910.0 490.0C918.8 485.3 912.4 470.3 912.8 462.0C913.2 453.7 912.7 445.8 912.6 440.0C912.5 434.2 913.0 433.9 912.2 427.2C911.4 420.5 910.0 411.2 908.0 400.0C906.0 388.8 904.1 368.2 900.0 360.0C895.9 351.8 888.3 352.2 883.5 350.6Z" fill="none" stroke="#5a5a5a" stroke-opacity="1.0" stroke-width="10" filter="url(#bl3)" transform="translate(1,0)"/><circle cx="883.5" cy="387.3" r="19.3" fill="#9a9a9a"/><circle cx="883.5" cy="387.3" r="19.3" fill="none" stroke="#d8d8d8" stroke-width="0.8"/><path d="M852 418Q862 404 884 409L906 425L908 492L858 492Z" fill="#d6d6d6" filter="url(#bl4)"/></g><defs><linearGradient id="colg" x1="0" x2="1" y1="0" y2="0"><stop offset="0" stop-color="#9c9c9c"/><stop offset="0.06" stop-color="#b8b8b8"/><stop offset="0.3" stop-color="#cbcbcb"/><stop offset="0.55" stop-color="#d0d0d0"/><stop offset="0.85" stop-color="#c2c2c2"/><stop offset="0.96" stop-color="#b0b0b0"/><stop offset="1" stop-color="#909090"/></linearGradient></defs><path d="M855 456L914 456L916 543L858 543Z" fill="url(#colg)"/><path d="M855.5 460Q885 466 913.8 460" fill="none" stroke="#e6e6e6" stroke-width="0.8" stroke-dasharray="2 1.5" opacity="0.8"/><path d="M863 461L863.6 540" stroke="#eeeeee" stroke-width="1" opacity="0.25"/><path d="M869 461L869.6 540" stroke="#eeeeee" stroke-width="1" opacity="0.18"/><path d="M878 461L878.6 540" stroke="#eeeeee" stroke-width="1" opacity="0.2"/><path d="M890 461L890.6 540" stroke="#eeeeee" stroke-width="1" opacity="0.22"/><path d="M899 461L899.6 540" stroke="#eeeeee" stroke-width="1" opacity="0.2"/><path d="M906 461L906.6 540" stroke="#eeeeee" stroke-width="1" opacity="0.2"/><clipPath id="lc4"><path d="M883.6 312.0C883.9 303.7 884.3 303.5 885.5 300.0C886.7 296.5 888.6 293.5 891.0 291.0C893.4 288.5 896.5 286.4 900.0 285.0C903.5 283.6 908.0 282.7 912.0 282.6C916.0 282.5 920.5 283.3 924.0 284.5C927.5 285.7 930.5 287.6 933.0 290.0C935.5 292.4 937.5 295.3 939.0 299.0C940.5 302.7 941.6 301.8 942.1 312.0C942.6 322.2 942.1 346.2 942.0 360.0C941.9 373.8 942.5 386.1 941.5 394.8C940.5 403.5 938.7 407.4 935.9 412.2C933.1 417.0 929.0 421.0 924.6 423.4C920.2 425.8 914.7 427.0 909.7 426.6C904.7 426.2 898.9 423.8 894.8 421.0C890.6 418.2 886.7 414.0 884.8 409.7C882.9 405.4 883.8 404.9 883.6 395.0C883.4 385.1 883.6 363.8 883.6 350.0C883.6 336.2 883.3 320.3 883.6 312.0Z"/></clipPath><g clip-path="url(#lc4)"><path d="M883.6 312.0C883.9 303.7 884.3 303.5 885.5 300.0C886.7 296.5 888.6 293.5 891.0 291.0C893.4 288.5 896.5 286.4 900.0 285.0C903.5 283.6 908.0 282.7 912.0 282.6C916.0 282.5 920.5 283.3 924.0 284.5C927.5 285.7 930.5 287.6 933.0 290.0C935.5 292.4 937.5 295.3 939.0 299.0C940.5 302.7 941.6 301.8 942.1 312.0C942.6 322.2 942.1 346.2 942.0 360.0C941.9 373.8 942.5 386.1 941.5 394.8C940.5 403.5 938.7 407.4 935.9 412.2C933.1 417.0 929.0 421.0 924.6 423.4C920.2 425.8 914.7 427.0 909.7 426.6C904.7 426.2 898.9 423.8 894.8 421.0C890.6 418.2 886.7 414.0 884.8 409.7C882.9 405.4 883.8 404.9 883.6 395.0C883.4 385.1 883.6 363.8 883.6 350.0C883.6 336.2 883.3 320.3 883.6 312.0Z" fill="#e2e2e2"/><path d="M883.6 312.0C883.9 303.7 884.3 303.5 885.5 300.0C886.7 296.5 888.6 293.5 891.0 291.0C893.4 288.5 896.5 286.4 900.0 285.0C903.5 283.6 908.0 282.7 912.0 282.6C916.0 282.5 920.5 283.3 924.0 284.5C927.5 285.7 930.5 287.6 933.0 290.0C935.5 292.4 937.5 295.3 939.0 299.0C940.5 302.7 941.6 301.8 942.1 312.0C942.6 322.2 942.1 346.2 942.0 360.0C941.9 373.8 942.5 386.1 941.5 394.8C940.5 403.5 938.7 407.4 935.9 412.2C933.1 417.0 929.0 421.0 924.6 423.4C920.2 425.8 914.7 427.0 909.7 426.6C904.7 426.2 898.9 423.8 894.8 421.0C890.6 418.2 886.7 414.0 884.8 409.7C882.9 405.4 883.8 404.9 883.6 395.0C883.4 385.1 883.6 363.8 883.6 350.0C883.6 336.2 883.3 320.3 883.6 312.0Z" fill="none" stroke="#686868" stroke-opacity="1.0" stroke-width="9" filter="url(#bl3)" transform="translate(-2.5,-1)"/><path d="M937 292L937 408" fill="none" stroke="#a4a4a4" stroke-width="12" filter="url(#bl4)"/><path d="M889 368Q912 378 938 366" fill="none" stroke="#f0f0f0" stroke-width="1" opacity="0.5"/></g><clipPath id="lc5"><path d="M769.3 338.7C765.1 342.2 766.4 349.7 764.9 354.9C763.4 360.1 761.4 364.8 760.5 369.8C759.6 374.8 759.3 379.6 759.3 384.8C759.3 390.0 760.1 395.8 760.5 401.0C760.9 406.2 756.9 412.5 761.8 416.0C766.7 419.5 782.8 422.0 790.0 422.0C797.2 422.0 802.5 419.2 805.0 416.0C807.5 412.8 804.9 407.4 804.8 402.8C804.6 398.2 804.1 393.6 804.1 388.5C804.1 383.4 804.2 377.3 804.8 372.3C805.4 367.3 806.4 362.7 807.9 358.6C809.4 354.6 812.3 351.4 813.5 348.0C814.7 344.6 818.9 340.3 815.0 338.0C811.1 335.7 797.6 333.9 790.0 334.0C782.4 334.1 773.5 335.2 769.3 338.7Z"/></clipPath><g clip-path="url(#lc5)"><path d="M769.3 338.7C765.1 342.2 766.4 349.7 764.9 354.9C763.4 360.1 761.4 364.8 760.5 369.8C759.6 374.8 759.3 379.6 759.3 384.8C759.3 390.0 760.1 395.8 760.5 401.0C760.9 406.2 756.9 412.5 761.8 416.0C766.7 419.5 782.8 422.0 790.0 422.0C797.2 422.0 802.5 419.2 805.0 416.0C807.5 412.8 804.9 407.4 804.8 402.8C804.6 398.2 804.1 393.6 804.1 388.5C804.1 383.4 804.2 377.3 804.8 372.3C805.4 367.3 806.4 362.7 807.9 358.6C809.4 354.6 812.3 351.4 813.5 348.0C814.7 344.6 818.9 340.3 815.0 338.0C811.1 335.7 797.6 333.9 790.0 334.0C782.4 334.1 773.5 335.2 769.3 338.7Z" fill="#cdcdcd"/><path d="M769.3 338.7C765.1 342.2 766.4 349.7 764.9 354.9C763.4 360.1 761.4 364.8 760.5 369.8C759.6 374.8 759.3 379.6 759.3 384.8C759.3 390.0 760.1 395.8 760.5 401.0C760.9 406.2 756.9 412.5 761.8 416.0C766.7 419.5 782.8 422.0 790.0 422.0C797.2 422.0 802.5 419.2 805.0 416.0C807.5 412.8 804.9 407.4 804.8 402.8C804.6 398.2 804.1 393.6 804.1 388.5C804.1 383.4 804.2 377.3 804.8 372.3C805.4 367.3 806.4 362.7 807.9 358.6C809.4 354.6 812.3 351.4 813.5 348.0C814.7 344.6 818.9 340.3 815.0 338.0C811.1 335.7 797.6 333.9 790.0 334.0C782.4 334.1 773.5 335.2 769.3 338.7Z" fill="none" stroke="#5a5a5a" stroke-opacity="1.0" stroke-width="9" filter="url(#bl3)" transform="translate(2,0)"/><path d="M776 351Q795 351 818 346" fill="none" stroke="#202020" stroke-width="19" filter="url(#bl5)" transform="translate(2,1)"/></g><clipPath id="lc6"><path d="M763.7 260.0C763.6 252.6 763.2 251.6 763.7 247.4C764.2 243.2 765.0 238.2 766.9 234.9C768.8 231.6 771.6 229.3 775.0 227.4C778.4 225.5 781.5 224.2 787.3 223.7C793.1 223.2 803.9 223.2 809.7 224.3C815.5 225.4 819.2 226.6 822.0 230.0C824.8 233.4 825.8 234.7 826.5 245.0C827.2 255.3 826.4 277.2 826.5 292.0C826.6 306.8 827.5 325.6 827.2 334.0C826.9 342.4 826.8 340.2 824.7 342.4C822.6 344.6 819.5 346.0 814.7 347.4C809.9 348.8 802.2 350.1 796.0 350.5C789.8 350.9 781.8 350.8 777.4 349.9C773.0 349.0 771.3 349.1 769.8 345.0C768.3 340.9 769.5 333.8 768.6 325.0C767.7 316.2 765.3 302.8 764.5 292.0C763.7 281.2 763.8 267.4 763.7 260.0Z"/></clipPath><g clip-path="url(#lc6)"><path d="M763.7 260.0C763.6 252.6 763.2 251.6 763.7 247.4C764.2 243.2 765.0 238.2 766.9 234.9C768.8 231.6 771.6 229.3 775.0 227.4C778.4 225.5 781.5 224.2 787.3 223.7C793.1 223.2 803.9 223.2 809.7 224.3C815.5 225.4 819.2 226.6 822.0 230.0C824.8 233.4 825.8 234.7 826.5 245.0C827.2 255.3 826.4 277.2 826.5 292.0C826.6 306.8 827.5 325.6 827.2 334.0C826.9 342.4 826.8 340.2 824.7 342.4C822.6 344.6 819.5 346.0 814.7 347.4C809.9 348.8 802.2 350.1 796.0 350.5C789.8 350.9 781.8 350.8 777.4 349.9C773.0 349.0 771.3 349.1 769.8 345.0C768.3 340.9 769.5 333.8 768.6 325.0C767.7 316.2 765.3 302.8 764.5 292.0C763.7 281.2 763.8 267.4 763.7 260.0Z" fill="#c6c6c6"/><path d="M763.7 260.0C763.6 252.6 763.2 251.6 763.7 247.4C764.2 243.2 765.0 238.2 766.9 234.9C768.8 231.6 771.6 229.3 775.0 227.4C778.4 225.5 781.5 224.2 787.3 223.7C793.1 223.2 803.9 223.2 809.7 224.3C815.5 225.4 819.2 226.6 822.0 230.0C824.8 233.4 825.8 234.7 826.5 245.0C827.2 255.3 826.4 277.2 826.5 292.0C826.6 306.8 827.5 325.6 827.2 334.0C826.9 342.4 826.8 340.2 824.7 342.4C822.6 344.6 819.5 346.0 814.7 347.4C809.9 348.8 802.2 350.1 796.0 350.5C789.8 350.9 781.8 350.8 777.4 349.9C773.0 349.0 771.3 349.1 769.8 345.0C768.3 340.9 769.5 333.8 768.6 325.0C767.7 316.2 765.3 302.8 764.5 292.0C763.7 281.2 763.8 267.4 763.7 260.0Z" fill="none" stroke="#505050" stroke-opacity="1.0" stroke-width="10" filter="url(#bl3)" transform="translate(2.5,-1)"/><path d="M812 222L796 238.6L791 251.1L791.7 266L798.5 279.7L809.7 288.5L822.2 292.2L836 290" fill="none" stroke="#2a2a2a" stroke-width="13" filter="url(#bl4)" transform="translate(-2,1)"/><path d="M764 250Q775 226 812 224" fill="none" stroke="#8a8a8a" stroke-width="26" filter="url(#bl5)"/><path d="M767 321.5Q797 324 827 320.5" fill="none" stroke="#6a6a6a" stroke-width="0.8"/><path d="M764 346Q796 357 829 341" fill="none" stroke="#6a6a6a" stroke-width="12" filter="url(#bl3)"/></g><clipPath id="lc7"><path d="M730.6 427.4C730.9 422.6 731.7 423.0 733.7 421.2C735.7 419.4 738.5 417.9 742.4 416.8C746.3 415.8 752.8 414.9 757.4 414.9C762.0 414.9 766.7 415.9 769.8 416.8C772.9 417.7 774.1 418.6 776.0 420.5C777.9 422.4 779.8 423.9 781.0 428.0C782.2 432.1 782.9 438.7 783.5 445.0C784.1 451.3 784.5 458.1 784.8 466.0C785.1 473.9 785.2 487.2 785.4 492.2C785.6 497.2 790.1 494.9 786.0 496.0C781.9 497.1 769.3 499.0 761.0 499.0C752.7 499.0 740.7 500.1 736.2 496.0C731.8 491.9 735.0 482.4 734.3 474.7C733.6 467.0 732.4 457.7 731.8 449.8C731.2 441.9 730.3 432.2 730.6 427.4Z"/></clipPath><g clip-path="url(#lc7)"><path d="M730.6 427.4C730.9 422.6 731.7 423.0 733.7 421.2C735.7 419.4 738.5 417.9 742.4 416.8C746.3 415.8 752.8 414.9 757.4 414.9C762.0 414.9 766.7 415.9 769.8 416.8C772.9 417.7 774.1 418.6 776.0 420.5C777.9 422.4 779.8 423.9 781.0 428.0C782.2 432.1 782.9 438.7 783.5 445.0C784.1 451.3 784.5 458.1 784.8 466.0C785.1 473.9 785.2 487.2 785.4 492.2C785.6 497.2 790.1 494.9 786.0 496.0C781.9 497.1 769.3 499.0 761.0 499.0C752.7 499.0 740.7 500.1 736.2 496.0C731.8 491.9 735.0 482.4 734.3 474.7C733.6 467.0 732.4 457.7 731.8 449.8C731.2 441.9 730.3 432.2 730.6 427.4Z" fill="#e8e8e8"/><path d="M730.6 427.4C730.9 422.6 731.7 423.0 733.7 421.2C735.7 419.4 738.5 417.9 742.4 416.8C746.3 415.8 752.8 414.9 757.4 414.9C762.0 414.9 766.7 415.9 769.8 416.8C772.9 417.7 774.1 418.6 776.0 420.5C777.9 422.4 779.8 423.9 781.0 428.0C782.2 432.1 782.9 438.7 783.5 445.0C784.1 451.3 784.5 458.1 784.8 466.0C785.1 473.9 785.2 487.2 785.4 492.2C785.6 497.2 790.1 494.9 786.0 496.0C781.9 497.1 769.3 499.0 761.0 499.0C752.7 499.0 740.7 500.1 736.2 496.0C731.8 491.9 735.0 482.4 734.3 474.7C733.6 467.0 732.4 457.7 731.8 449.8C731.2 441.9 730.3 432.2 730.6 427.4Z" fill="none" stroke="#747474" stroke-opacity="1.0" stroke-width="9" filter="url(#bl3)" transform="translate(1.5,0)"/><path d="M731 427Q757 436 780 426L776 420.5L769.8 416.8L757.4 414.9L742.4 416.8L733.7 421.2Z" fill="#c2c2c2" opacity="0.8" filter="url(#bl1)"/><path d="M779 424Q770 440 778 462" fill="none" stroke="#b8b8b8" stroke-width="3" filter="url(#bl2)"/></g><clipPath id="lk8"><path d="M757 395L764 412L769.8 416.8L776 420.5L771 430L768.6 441L770 452L773.5 458.5L776 470L850 470L850 395Z"/></clipPath><g clip-path="url(#lk8)"><clipPath id="lc8"><path d="M761.8 414.6C766.1 411.6 767.5 409.3 771.1 407.2C774.7 405.1 779.5 403.1 783.6 402.2C787.8 401.3 792.5 401.0 796.0 401.6C799.5 402.2 800.8 403.7 804.8 405.9C808.8 408.1 815.1 411.3 819.7 414.6C824.3 417.9 829.0 422.3 832.2 425.9C835.4 429.5 837.9 432.5 838.9 436.1C839.9 439.7 839.4 444.0 838.3 447.3C837.2 450.6 835.2 453.5 832.1 456.0C829.0 458.5 824.8 460.9 819.6 462.3C814.4 463.7 806.7 464.1 800.9 464.1C795.1 464.1 789.4 463.2 784.8 462.3C780.2 461.4 778.5 460.2 773.5 458.5C768.5 456.8 760.2 455.1 755.0 452.0C749.8 448.9 743.7 444.5 742.0 440.0C740.3 435.5 741.7 429.2 745.0 425.0C748.3 420.8 757.4 417.6 761.8 414.6Z"/></clipPath><g clip-path="url(#lc8)"><path d="M761.8 414.6C766.1 411.6 767.5 409.3 771.1 407.2C774.7 405.1 779.5 403.1 783.6 402.2C787.8 401.3 792.5 401.0 796.0 401.6C799.5 402.2 800.8 403.7 804.8 405.9C808.8 408.1 815.1 411.3 819.7 414.6C824.3 417.9 829.0 422.3 832.2 425.9C835.4 429.5 837.9 432.5 838.9 436.1C839.9 439.7 839.4 444.0 838.3 447.3C837.2 450.6 835.2 453.5 832.1 456.0C829.0 458.5 824.8 460.9 819.6 462.3C814.4 463.7 806.7 464.1 800.9 464.1C795.1 464.1 789.4 463.2 784.8 462.3C780.2 461.4 778.5 460.2 773.5 458.5C768.5 456.8 760.2 455.1 755.0 452.0C749.8 448.9 743.7 444.5 742.0 440.0C740.3 435.5 741.7 429.2 745.0 425.0C748.3 420.8 757.4 417.6 761.8 414.6Z" fill="#e4e4e4"/><path d="M761.8 414.6C766.1 411.6 767.5 409.3 771.1 407.2C774.7 405.1 779.5 403.1 783.6 402.2C787.8 401.3 792.5 401.0 796.0 401.6C799.5 402.2 800.8 403.7 804.8 405.9C808.8 408.1 815.1 411.3 819.7 414.6C824.3 417.9 829.0 422.3 832.2 425.9C835.4 429.5 837.9 432.5 838.9 436.1C839.9 439.7 839.4 444.0 838.3 447.3C837.2 450.6 835.2 453.5 832.1 456.0C829.0 458.5 824.8 460.9 819.6 462.3C814.4 463.7 806.7 464.1 800.9 464.1C795.1 464.1 789.4 463.2 784.8 462.3C780.2 461.4 778.5 460.2 773.5 458.5C768.5 456.8 760.2 455.1 755.0 452.0C749.8 448.9 743.7 444.5 742.0 440.0C740.3 435.5 741.7 429.2 745.0 425.0C748.3 420.8 757.4 417.6 761.8 414.6Z" fill="none" stroke="#6a6a6a" stroke-opacity="1.0" stroke-width="11" filter="url(#bl4)" transform="translate(-1,-3)"/><path d="M768.6 414.6L781.1 405.9L796 402.8L804.8 407.2L789.8 414.6L784.8 420.9L777.4 420.9Z" fill="#8f8f8f"/><path d="M789.8 414.6L804.8 407.2L801 412L787 420Z" fill="#a9a9a9"/><circle cx="821.5" cy="441.1" r="13" fill="none" stroke="#9a9a9a" stroke-width="1"/><circle cx="821.5" cy="441.1" r="11.3" fill="none" stroke="#b5b5b5" stroke-width="0.7"/><path d="M821.5 431.5l6.8 2.8l2.8 6.8l-2.8 6.8l-6.8 2.8l-6.8 -2.8l-2.8 -6.8l2.8 -6.8z" fill="none" stroke="#b0b0b0" stroke-width="0.8"/><path d="M817 446l4 -8l3 5l3 -4" fill="none" stroke="#bcbcbc" stroke-width="0.9"/></g></g><clipPath id="lc9"><path d="M845.0 172.0C847.5 167.2 849.5 164.6 852.0 162.0C854.5 159.4 857.0 157.2 859.7 156.5C862.5 155.8 865.6 156.8 868.5 157.8C871.4 158.8 873.7 160.1 877.2 162.5C880.7 164.9 886.4 168.2 889.6 172.4C892.8 176.6 895.5 182.4 896.5 187.4C897.5 192.4 896.3 198.4 895.9 202.3C895.5 206.2 898.0 203.9 894.0 211.0C890.0 218.1 879.4 233.4 872.0 244.6C864.6 255.8 854.8 271.3 849.8 278.3C844.8 285.3 845.0 284.5 841.7 286.7C838.4 288.9 833.2 290.8 830.0 291.7C826.8 292.6 825.6 292.7 822.2 292.2C818.8 291.7 813.7 290.6 809.7 288.5C805.8 286.4 801.5 283.4 798.5 279.7C795.5 275.9 793.0 270.8 791.7 266.0C790.5 261.2 790.3 255.7 791.0 251.1C791.7 246.5 792.0 243.6 796.0 238.6C800.0 233.6 807.8 229.1 814.7 221.2C821.6 213.3 832.2 199.3 837.3 191.1C842.3 182.9 842.5 176.8 845.0 172.0Z"/></clipPath><g clip-path="url(#lc9)"><path d="M845.0 172.0C847.5 167.2 849.5 164.6 852.0 162.0C854.5 159.4 857.0 157.2 859.7 156.5C862.5 155.8 865.6 156.8 868.5 157.8C871.4 158.8 873.7 160.1 877.2 162.5C880.7 164.9 886.4 168.2 889.6 172.4C892.8 176.6 895.5 182.4 896.5 187.4C897.5 192.4 896.3 198.4 895.9 202.3C895.5 206.2 898.0 203.9 894.0 211.0C890.0 218.1 879.4 233.4 872.0 244.6C864.6 255.8 854.8 271.3 849.8 278.3C844.8 285.3 845.0 284.5 841.7 286.7C838.4 288.9 833.2 290.8 830.0 291.7C826.8 292.6 825.6 292.7 822.2 292.2C818.8 291.7 813.7 290.6 809.7 288.5C805.8 286.4 801.5 283.4 798.5 279.7C795.5 275.9 793.0 270.8 791.7 266.0C790.5 261.2 790.3 255.7 791.0 251.1C791.7 246.5 792.0 243.6 796.0 238.6C800.0 233.6 807.8 229.1 814.7 221.2C821.6 213.3 832.2 199.3 837.3 191.1C842.3 182.9 842.5 176.8 845.0 172.0Z" fill="#e6e6e6"/><path d="M845.0 172.0C847.5 167.2 849.5 164.6 852.0 162.0C854.5 159.4 857.0 157.2 859.7 156.5C862.5 155.8 865.6 156.8 868.5 157.8C871.4 158.8 873.7 160.1 877.2 162.5C880.7 164.9 886.4 168.2 889.6 172.4C892.8 176.6 895.5 182.4 896.5 187.4C897.5 192.4 896.3 198.4 895.9 202.3C895.5 206.2 898.0 203.9 894.0 211.0C890.0 218.1 879.4 233.4 872.0 244.6C864.6 255.8 854.8 271.3 849.8 278.3C844.8 285.3 845.0 284.5 841.7 286.7C838.4 288.9 833.2 290.8 830.0 291.7C826.8 292.6 825.6 292.7 822.2 292.2C818.8 291.7 813.7 290.6 809.7 288.5C805.8 286.4 801.5 283.4 798.5 279.7C795.5 275.9 793.0 270.8 791.7 266.0C790.5 261.2 790.3 255.7 791.0 251.1C791.7 246.5 792.0 243.6 796.0 238.6C800.0 233.6 807.8 229.1 814.7 221.2C821.6 213.3 832.2 199.3 837.3 191.1C842.3 182.9 842.5 176.8 845.0 172.0Z" fill="none" stroke="#707070" stroke-opacity="1.0" stroke-width="9" filter="url(#bl3)" transform="translate(-3,-2)"/><path d="M896.5 187.4L895.9 202.3L894 211L872 244.6L849.8 278.3L841.7 286.7L830 291.7" fill="none" stroke="#3c3c3c" stroke-width="5" filter="url(#bl2)"/><path d="M838 184q-3 10 1 20" fill="none" stroke="#555" stroke-width="0.8"/><path d="M851 205l8 3" fill="none" stroke="#777" stroke-width="0.7"/><path d="M825 281l0.5 9l-7 1z" fill="#3a3a3a"/></g><defs><linearGradient id="bandg" x1="0" x2="1" y1="0" y2="0"><stop offset="0" stop-color="#8a8a8a"/><stop offset="0.1" stop-color="#b0b0b0"/><stop offset="0.5" stop-color="#a2a2a2"/><stop offset="0.85" stop-color="#909090"/><stop offset="1" stop-color="#6e6e6e"/></linearGradient></defs><path d="M736 494.5Q761 499.5 785.5 492L786.2 508.5Q761 516.5 738 512.5Z" fill="url(#bandg)"/><path d="M764 499h11v2.5h-4v3h4v2.5h-4v4h-3v-4h-4z" fill="#c6c6c6" opacity="0.7"/><path d="M736.8 513.3L787.7 512.0L786.8 531.7L780.2 548.3L766.0 555.0L749.3 550.0L739.3 538.3Z" fill="#0c0c0c"/><path d="M739.3 533.3L735.2 563.3L738.5 573.3L743.5 580.8L760.2 578.3L763.5 566.7L771.0 553.3L766.0 541.7L749.3 538.3Z" fill="#111111"/><path d="M764.3 543.3L789.3 548.3L794.3 570.0L802.7 600.0L798.5 615.0L787.7 615.0L782.7 603.3L771.0 573.3Z" fill="#151515"/><path d="M762.7 593.3L774.3 586.7L782.7 606.7L780.2 626.7L771.0 633.3L764.3 616.7Z" fill="#0e0e0e"/><path d="M786.8 615.0L798.5 615.0L798.5 630.0L787.7 631.7Z" fill="#121212"/><path d="M742.7 580.0L760.2 577.5L762.7 616.7L746.8 620.0Z" fill="#b9b9b9"/><path d="M742.7 580.0L745.2 579.7L749.0 619.7L746.8 620.0Z" fill="#a2a2a2"/><path d="M780.2 615.8L786.8 615.0L787.7 631.7L798.5 630.0L800.2 649.2L783.5 653.3Z" fill="#c2c2c2"/><path d="M780.2 615.8L782.3 615.5L785.7 653.0L783.5 653.3Z" fill="#a8a8a8"/><path d="M763.5 540.0L772.7 539.2L780.2 546.7L785.2 548.3L786.0 561.7L781.8 562.5L780.2 555.0L772.7 551.7L766.0 546.7Z" fill="#9a9aa8"/><path d="M766.0 540.8L771.8 540.3L775.2 545.0L769.3 547.5Z" fill="#c2c2d0"/><path d="M742.3 533.8L748.0 535.0L747.7 537.0L742.7 536.0Z" fill="#c8c8c8"/><ellipse cx="886.5" cy="547.5" rx="39.5" ry="14.5" fill="#8e8e8e"/><ellipse cx="886.5" cy="544.5" rx="39.5" ry="14.5" fill="#bdbdbd"/><ellipse cx="885.5" cy="541.5" rx="31" ry="10.5" fill="#a9a9a9"/><ellipse cx="885" cy="540" rx="29" ry="9.5" fill="#cfcfcf"/><path d="M857 520V540A29 9.5 0 0 0 915 540V520Z" fill="url(#colg)"/><ellipse cx="886" cy="539" rx="25" ry="7.5" fill="#d6d6d6" opacity="0.8"/><ellipse cx="886" cy="538" rx="25" ry="7.5" fill="none" stroke="#e2e2e2" stroke-width="1"/><circle cx="855.5" cy="547" r="1.4" fill="#e6e6e6"/><circle cx="858" cy="551" r="1.4" fill="#e6e6e6"/><circle cx="886" cy="557" r="1.4" fill="#e6e6e6"/><circle cx="917" cy="548" r="1.4" fill="#e6e6e6"/><circle cx="911" cy="538" r="1.4" fill="#e6e6e6"/><path d="M911 517l4 -2.5l7 -1l2.5 3l8 -2.5h8.5l2 2.5v7l-2.5 2.5h-8l-8 3.5l-3.5 1v10l-5 1.5v-13l-5 -3z" fill="#c3c3c3"/><path d="M924.5 517l8 -2.5v12.5l-8 3.5z" fill="#aaaaaa"/><path d="M901 509q6 1 10 7" fill="none" stroke="#9a9a9a" stroke-width="1"/></g></svg></div>
</body></html>
